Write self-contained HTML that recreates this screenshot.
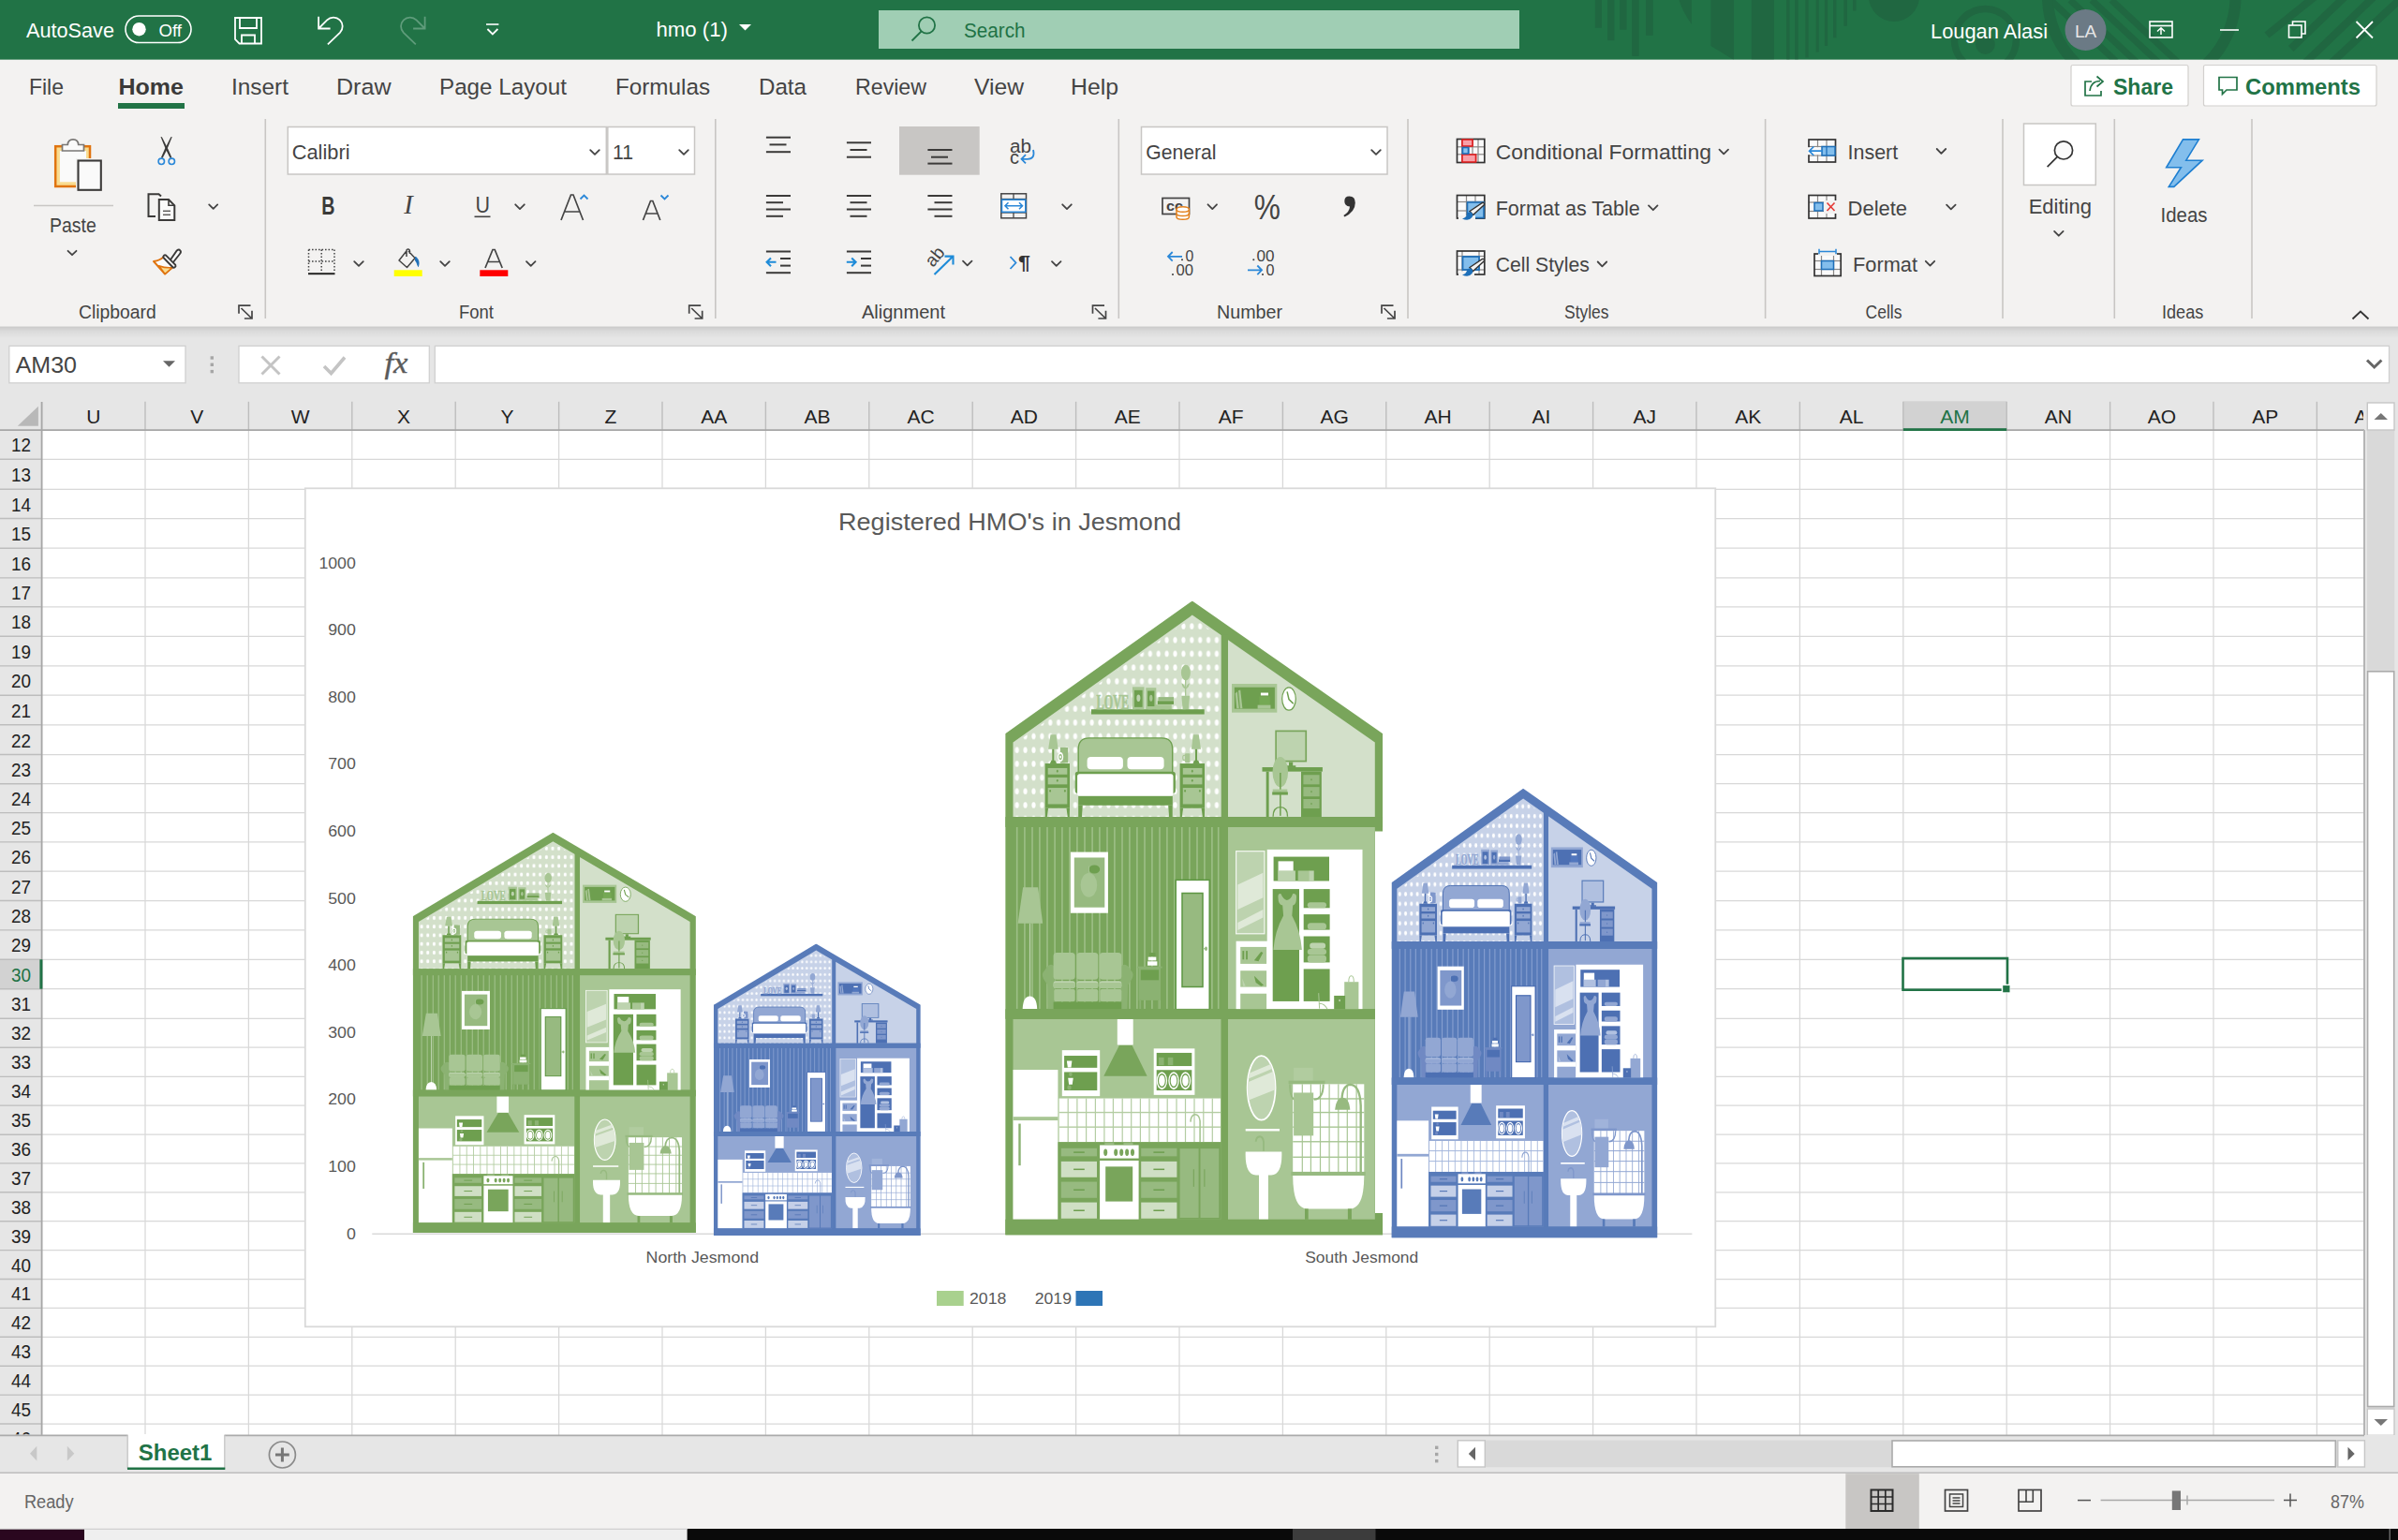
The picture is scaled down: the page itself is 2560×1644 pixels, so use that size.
<!DOCTYPE html>
<html><head><meta charset="utf-8"><title>hmo (1) - Excel</title><style>html,body{margin:0;padding:0;background:#fff;overflow:hidden}
svg{display:block}
text{font-family:"Liberation Sans",sans-serif;white-space:pre}
.hd{fill:var(--d)}.hm{fill:var(--m)}.ha{fill:var(--a)}.hb{fill:var(--b)}.hc{fill:var(--c)}.hl{fill:var(--l)}.hk{fill:var(--k)}.hq{fill:var(--q)}.hq2{fill:var(--q2)}.hg{fill:var(--g)}.hs{fill:var(--s)}.ht{fill:var(--t)}.hm2{fill:var(--m);filter:brightness(1.06)}.hw{fill:#fff}.hn{fill:none}
</style></head>
<body><svg width="2560" height="1644" viewBox="0 0 2560 1644">
<defs>
<linearGradient id="rshadow" x1="0" y1="0" x2="0" y2="1"><stop offset="0" stop-color="#000" stop-opacity="0.13"/><stop offset="0.4" stop-color="#000" stop-opacity="0.05"/><stop offset="1" stop-color="#000" stop-opacity="0"/></linearGradient>
<clipPath id="tbclip"><rect x="1650" y="0" width="910" height="63.5"/></clipPath>
<clipPath id="ringclip"><circle cx="2286.3" cy="-4" r="95"/></clipPath>
<clipPath id="hdrclip"><rect x="0" y="429" width="2523" height="30"/></clipPath>
<clipPath id="rowclip"><rect x="0" y="459" width="44" height="1072.5"/></clipPath>
<symbol id="house" viewBox="0 0 403 677" preserveAspectRatio="none">
<pattern id="dots" patternUnits="userSpaceOnUse" x="8.06" y="19.76" width="8.885" height="14.68"><ellipse cx="4.44" cy="7.34" rx="2.1" ry="3.3" fill="#fff"/></pattern>
<clipPath id="mirclip"><ellipse cx="273.4" cy="519.8" rx="14.7" ry="33.9"/></clipPath>
<polygon class="hd" points="0,141.8 199.6,0 403,141.8 403,677 0,677"/>
<polygon class="hl" points="8.3,230.6 8.3,151 199.6,15.2 394.6,151 394.6,230.6"/>
<rect class="ha" x="237.8" y="241.5" width="156.8" height="194.2"/>
<rect class="ha" x="8.3" y="446.3" width="222.2" height="214"/>
<rect class="ha" x="237.8" y="446.3" width="156.8" height="214"/>
<polygon fill="url(#dots)" points="8.3,230.6 8.3,153.5 199.6,17.7 230.5,39.5 230.5,230.6"/>
<rect class="hm" x="91.8" y="115.8" width="120.7" height="5.3"/>
<text class="ha" x="97.4" y="115.2" style="font-family:'Liberation Serif',serif;font-weight:bold;font-size:23.5px;stroke:var(--a);stroke-width:0.7" textLength="34.5" lengthAdjust="spacingAndGlyphs">LOVE</text>
<rect class="ha" x="135.8" y="91.9" width="12.5" height="23.7"/>
<rect class="hm" x="137.8" y="95.4" width="8.6" height="18"/>
<ellipse class="hk" cx="142.2" cy="103.8" rx="2" ry="3.7"/>
<rect class="ha" x="150.1" y="92.8" width="11" height="22.8"/>
<rect class="hm" x="151.9" y="96.1" width="7.3" height="16.5"/>
<ellipse class="ha" cx="155.6" cy="103.8" rx="1.7" ry="3.5"/>
<rect class="hb" x="163.3" y="102.7" width="16.5" height="3.7"/>
<rect class="hm" x="162.6" y="106.8" width="17.2" height="3.7"/>
<rect class="ha" x="160.2" y="110.8" width="17.4" height="4.8"/>
<polygon class="ha" points="188.1,101.4 196.9,101.4 195.6,115.6 189.4,115.6"/>
<rect class="ha" x="191.8" y="84" width="1.3" height="17.4"/>
<ellipse class="ha" cx="192.7" cy="76.7" rx="5" ry="8.3"/>
<path class="ha" d="M192.3 94.1Q188.6 92.3 188.3 87.7Q191.9 89.5 192.3 94.1M192.7 94.1Q196.3 92.3 196.7 87.7Q193 89.5 192.7 94.1"/>
<rect class="hm" x="42.4" y="173.6" width="26.4" height="47.7"/>
<rect class="ha" x="45.5" y="178.5" width="20.6" height="6.8"/>
<rect class="ha" x="45.5" y="188.6" width="20.6" height="7.3"/>
<rect class="ha" x="45.5" y="199.6" width="20.6" height="17.4"/>
<ellipse class="hm" cx="55.6" cy="181.8" rx="0.9" ry="1.4"/>
<ellipse class="hm" cx="55.6" cy="191.9" rx="0.9" ry="1.4"/>
<ellipse class="hm" cx="47.9" cy="202.9" rx="0.9" ry="1.4"/>
<ellipse class="hm" cx="63.7" cy="202.9" rx="0.9" ry="1.4"/>
<polygon class="hm" points="42.4,221.3 45.9,221.3 44.6,230.8 42.6,230.8"/>
<polygon class="hm" points="65.3,221.3 68.8,221.3 68.6,230.8 66.6,230.8"/>
<rect class="hm" x="186.4" y="173.6" width="26.4" height="47.7"/>
<rect class="ha" x="189.6" y="178.5" width="20.6" height="6.8"/>
<rect class="ha" x="189.6" y="188.6" width="20.6" height="7.3"/>
<rect class="ha" x="189.6" y="199.6" width="20.6" height="17.4"/>
<ellipse class="hm" cx="199.6" cy="181.8" rx="0.9" ry="1.4"/>
<ellipse class="hm" cx="199.6" cy="191.9" rx="0.9" ry="1.4"/>
<ellipse class="hm" cx="191.9" cy="202.9" rx="0.9" ry="1.4"/>
<ellipse class="hm" cx="207.7" cy="202.9" rx="0.9" ry="1.4"/>
<polygon class="hm" points="186.4,221.3 189.9,221.3 188.6,230.8 186.6,230.8"/>
<polygon class="hm" points="209.4,221.3 212.9,221.3 212.7,230.8 210.7,230.8"/>
<polygon class="ha" points="48.3,142.7 54.3,142.7 56.5,158.3 45.9,158.3"/>
<rect class="hm" x="50.1" y="158.3" width="2" height="12.3"/>
<polygon class="hm" points="49.2,170.3 53.2,170.3 54.7,173.6 47.7,173.6"/>
<polygon class="ha" points="200.6,142.7 206.6,142.7 208.8,158.3 198.7,158.3"/>
<rect class="hm" x="202.8" y="158.3" width="2" height="12.3"/>
<polygon class="hm" points="201.8,170.3 205.9,170.3 207.4,173.6 200.4,173.6"/>
<rect class="hb" x="58.7" y="156.5" width="8.3" height="16.5"/>
<ellipse class="hw" cx="58.9" cy="166.6" rx="3.1" ry="5.1"/>
<ellipse class="hb" cx="58.9" cy="166.6" rx="1.8" ry="3.1"/>
<ellipse class="hw" cx="58.9" cy="166.6" rx="0.9" ry="1.5"/>
<rect class="ha" x="191.8" y="162.9" width="5.3" height="9.7" rx="1"/>
<ellipse class="ha" cx="191" cy="167.5" rx="1.5" ry="2.6" style="fill:none;stroke:var(--a);stroke-width:1"/>
<path class="ha" d="M78 184L78 158.3Q78 146.4 89.6 146.4L167 146.4Q178.5 146.4 178.5 158.3L178.5 184Z" style="stroke:var(--m);stroke-width:1.4"/>
<rect class="hw" x="87.4" y="166.6" width="38.3" height="13.2" rx="4"/>
<rect class="hw" x="130.3" y="166.6" width="39.1" height="13.2" rx="4"/>
<rect class="hm" x="74.5" y="182.4" width="107.2" height="23.1" rx="3"/>
<rect class="hw" x="76.9" y="184.9" width="102.4" height="23.3" rx="2.5"/>
<rect class="hm" x="78" y="208.4" width="100.6" height="9.9"/>
<polygon class="hm" points="78,218.3 82.6,218.3 81.7,230.8 78,230.8"/>
<polygon class="hm" points="174,218.3 178.5,218.3 178.5,230.8 174.9,230.8"/>
<rect class="ha" x="241.8" y="88.6" width="48.3" height="30.6"/>
<rect class="hm" x="244.6" y="92.3" width="43.1" height="22.9"/>
<polygon class="ha" points="245.5,98.7 247.7,96.9 249.6,114.8 247,114.8"/>
<polygon class="ha" points="248.8,95.9 251,95 253.2,114.8 250.7,114.8"/>
<rect class="hw" x="272.7" y="98.1" width="8.1" height="2.9"/>
<rect class="hm2" x="271.2" y="102" width="11.4" height="9.2"/>
<rect class="ha" x="269.4" y="111.2" width="13.8" height="4"/>
<ellipse class="hw" cx="302.8" cy="104.6" rx="7.3" ry="12.1" style="stroke:var(--m);stroke-width:1.2"/>
<path class="hn" d="M300.9 96.9L302.8 105.1L307.5 109.7" style="fill:none;stroke:var(--m);stroke-width:1.5"/>
<rect class="hd" x="288.1" y="138.1" width="33.8" height="33.9"/>
<rect class="hk" x="289.7" y="139.8" width="30.5" height="30.5"/>
<rect class="hm" x="302.8" y="172.1" width="4.2" height="5.5"/>
<rect class="hm" x="298.7" y="175.8" width="11.4" height="2.2"/>
<rect class="hm" x="274.3" y="177.6" width="64.4" height="4.6"/>
<rect class="hm" x="278.5" y="182.2" width="2.9" height="48.6"/>
<rect class="hm" x="315.8" y="182.2" width="21.8" height="48.6"/>
<rect class="hb" x="318.2" y="185.8" width="17.2" height="10.1"/>
<ellipse class="hm" cx="326.8" cy="190.9" rx="0.7" ry="1.1"/>
<rect class="hb" x="318.2" y="198.7" width="17.2" height="10.1"/>
<ellipse class="hm" cx="326.8" cy="203.7" rx="0.7" ry="1.1"/>
<rect class="hb" x="318.2" y="211.5" width="17.2" height="10.1"/>
<ellipse class="hm" cx="326.8" cy="216.6" rx="0.7" ry="1.1"/>
<ellipse class="ha" cx="293.6" cy="182.7" rx="8.3" ry="16.1"/>
<rect class="hm" x="292.9" y="183.5" width="1.5" height="45.9"/>
<rect class="ha" x="285.5" y="201.1" width="15.6" height="3.3"/>
<rect class="hm" x="285" y="204" width="16.7" height="3.1"/>
<path class="hn" d="M285.9 230.4Q285.9 220.2 293.6 220.2Q301.3 220.2 301.3 230.4" style="fill:none;stroke:var(--m);stroke-width:1.4"/>
<g class="hs">
<rect x="11.7" y="241.5" width="1.6" height="193.9"/>
<rect x="19.9" y="241.5" width="1.6" height="193.9"/>
<rect x="28" y="241.5" width="1.6" height="193.9"/>
<rect x="35.9" y="241.5" width="1.6" height="193.9"/>
<rect x="44" y="241.5" width="1.6" height="193.9"/>
<rect x="52.1" y="241.5" width="1.6" height="193.9"/>
<rect x="59.9" y="241.5" width="1.6" height="193.9"/>
<rect x="68" y="241.5" width="1.6" height="193.9"/>
<rect x="75.9" y="241.5" width="1.6" height="193.9"/>
<rect x="84" y="241.5" width="1.6" height="193.9"/>
<rect x="92.1" y="241.5" width="1.6" height="193.9"/>
<rect x="99.9" y="241.5" width="1.6" height="193.9"/>
<rect x="108" y="241.5" width="1.6" height="193.9"/>
<rect x="115.9" y="241.5" width="1.6" height="193.9"/>
<rect x="124" y="241.5" width="1.6" height="193.9"/>
<rect x="131.9" y="241.5" width="1.6" height="193.9"/>
<rect x="139.9" y="241.5" width="1.6" height="193.9"/>
<rect x="148" y="241.5" width="1.6" height="193.9"/>
<rect x="155.9" y="241.5" width="1.6" height="193.9"/>
<rect x="164" y="241.5" width="1.6" height="193.9"/>
<rect x="171.9" y="241.5" width="1.6" height="193.9"/>
<rect x="179.9" y="241.5" width="1.6" height="193.9"/>
<rect x="187.8" y="241.5" width="1.6" height="193.9"/>
<rect x="195.9" y="241.5" width="1.6" height="193.9"/>
<rect x="204" y="241.5" width="1.6" height="193.9"/>
<rect x="211.9" y="241.5" width="1.6" height="193.9"/>
<rect x="219.9" y="241.5" width="1.6" height="193.9"/>
<rect x="226.7" y="241.5" width="1.6" height="193.9"/>
</g>
<rect class="hw" x="69.7" y="268.1" width="40" height="65.1"/>
<rect class="hb" x="73.6" y="274" width="32.5" height="53.2"/>
<ellipse class="ha" cx="89.2" cy="303.4" rx="8.8" ry="12.8"/>
<ellipse class="hm" cx="95.1" cy="286.5" rx="5.9" ry="4.6"/>
<rect class="ha" x="88.8" y="283.2" width="0.9" height="8.8"/>
<polygon class="ha" points="18.9,305.8 34.9,305.8 40,344.3 13.4,344.3"/>
<rect class="hk" x="25.7" y="344.3" width="1.3" height="78.9"/>
<path class="hw" d="M18.5 435.5Q18.9 422.3 26.2 421.9Q33.6 422.3 34 435.5Z"/>
<path class="hc" d="M45.9 436L45.1 409.4Q36.3 399.3 41.8 394.7Q47.4 384.7 52.5 390.2L55.1 436Z"/>
<path class="hc" d="M130.3 436L131 409.4Q139.8 399.3 134.3 394.7Q128.8 384.7 123.7 390.2L121.1 436Z"/>
<rect class="ha" x="51.4" y="375.5" width="23.1" height="28.8" rx="3.5"/>
<rect class="hk" x="51.4" y="405.8" width="23.1" height="7.7" rx="2.5"/>
<rect class="ha" x="51.4" y="407.6" width="23.1" height="5.9" rx="2"/>
<rect class="ha" x="52.1" y="414.2" width="22.4" height="13.6" rx="2.5"/>
<rect class="ha" x="76.2" y="375.5" width="22.9" height="28.8" rx="3.5"/>
<rect class="hk" x="76.2" y="405.8" width="22.9" height="7.7" rx="2.5"/>
<rect class="ha" x="76.2" y="407.6" width="22.9" height="5.9" rx="2"/>
<rect class="ha" x="76.9" y="414.2" width="22.2" height="13.6" rx="2.5"/>
<rect class="ha" x="100.6" y="375.5" width="23.5" height="28.8" rx="3.5"/>
<rect class="hk" x="100.6" y="405.8" width="23.5" height="7.7" rx="2.5"/>
<rect class="ha" x="100.6" y="407.6" width="23.5" height="5.9" rx="2"/>
<rect class="ha" x="101.3" y="414.2" width="22.8" height="13.6" rx="2.5"/>
<rect class="hm" x="51.4" y="428.1" width="72.7" height="7.9"/>
<rect class="hc" x="142.4" y="391.1" width="23.3" height="35.2"/>
<rect class="hm" x="144.6" y="393.8" width="19.3" height="11"/>
<rect class="hc" x="140.9" y="390.2" width="26.6" height="1.8"/>
<rect class="hc" x="143.1" y="426.3" width="1.8" height="9.2"/>
<rect class="hc" x="162.9" y="426.3" width="1.8" height="9.2"/>
<rect class="hm" x="153.8" y="375.5" width="6.4" height="4"/>
<rect class="hw" x="152.5" y="380.1" width="8.6" height="3.7"/>
<rect class="hw" x="151.9" y="384.8" width="10.3" height="4.4"/>
<rect class="hw" x="182" y="297.9" width="36" height="138.2" style="stroke:var(--x);stroke-width:1.5"/>
<rect class="hb" x="188.8" y="312" width="22" height="100" style="stroke:var(--x);stroke-width:1.5"/>
<ellipse class="hb" cx="214.3" cy="371.3" rx="1.5" ry="2.2"/>
<rect class="hb" x="211" y="370.7" width="3.3" height="1.1"/>
<rect class="hk" x="246.4" y="267.2" width="30.3" height="88.1" style="stroke:#fff;stroke-opacity:.85;stroke-width:1.2"/>
<polygon class="hq" points="248.1,303 275.2,290.2 275.2,316.8 248.1,329.6"/>
<polygon class="hq" points="248.1,343.4 275.2,329.6 275.2,337.9 248.1,351.6"/>
<rect class="hw" x="279.5" y="265.4" width="101.8" height="170.6"/>
<rect class="hw" x="246.4" y="363.2" width="33.4" height="72.8"/>
<rect class="hm" x="286.4" y="273.1" width="59.4" height="25.9"/>
<rect class="hw" x="291.4" y="277.9" width="16.1" height="10.5"/>
<rect class="hk" x="291" y="288" width="18.7" height="11"/>
<rect class="ha" x="312.5" y="288" width="11.6" height="11"/>
<rect class="hk" x="324" y="288" width="5.5" height="11"/>
<rect class="hm" x="285.5" y="307.6" width="28.3" height="119.8"/>
<path class="ha" d="M291.4 317.7Q290.5 312.2 294.1 312.5Q296.9 318.6 300.6 319.5Q305.1 318.6 307 312.5Q311.6 312.2 310.7 317.7Q310.7 324.1 307 325L306.1 336Q315.2 352.5 316.7 372.4L286.2 372.4Q287.7 352.5 296.9 336L296 325Q291.4 324.1 291.4 317.7Z"/>
<rect class="hm" x="318.5" y="307.6" width="27.9" height="20.2"/>
<rect class="hm" x="318.5" y="334.6" width="27.9" height="16.5"/>
<rect class="hm" x="318.5" y="358" width="27.9" height="27.9"/>
<rect class="hm" x="318.5" y="392.9" width="27.9" height="34.5"/>
<rect class="ha" x="322.6" y="321.7" width="20.2" height="6.1" rx="3"/>
<rect class="ha" x="322.6" y="343.7" width="20.2" height="7.3" rx="3.5"/>
<rect class="hk" x="325" y="365" width="16.9" height="6.2" rx="3"/>
<rect class="ha" x="322.6" y="371.4" width="20.2" height="6.4" rx="3"/>
<rect class="ha" x="322.6" y="377.9" width="20.2" height="8.1" rx="3.5"/>
<rect class="ha" x="251" y="369.4" width="27.9" height="18"/>
<rect class="ha" x="251" y="394.7" width="27.9" height="17.4"/>
<rect class="ha" x="251" y="419.2" width="27.9" height="16.9"/>
<rect class="hm" x="253.2" y="373.6" width="1.8" height="9.2"/>
<rect class="hm" x="256.9" y="373.6" width="1.8" height="9.2"/>
<polygon class="hm" points="265.7,383.7 273,374.6 275.2,375.5 270.3,384.7"/>
<polygon class="hk" points="252.9,403 256.5,411.3 253.8,411.3"/>
<polygon class="hm" points="265.7,400.3 275.8,410.3 273,411.3 267.5,407.6"/>
<rect class="ha" x="362" y="406.7" width="15.2" height="29.4"/>
<path class="hn" d="M366.6 406.7Q366.6 400.3 369.4 400.3Q372.1 400.3 372.1 406.7" style="fill:none;stroke:var(--a);stroke-width:1"/>
<rect class="hm" x="351" y="421.4" width="11.9" height="14.7"/>
<ellipse class="hk" cx="356.9" cy="426.5" rx="0.9" ry="1.3"/>
<path class="hn" d="M334.5 418.6L335.4 435.1M335.4 429.6Q340.9 429.6 343.7 435.5" style="fill:none;stroke:var(--a);stroke-width:1"/>
<rect class="hw" x="8.3" y="500.5" width="47.9" height="159.6"/>
<rect class="ha" x="8.3" y="550.6" width="47.9" height="3.9"/>
<rect class="hc" x="14.1" y="558" width="2.4" height="44.6"/>
<rect class="hw" x="119.6" y="446.4" width="16.9" height="27.5"/>
<polygon class="hd" points="121.7,474.5 135.4,474.5 151.4,507.1 105.1,507.1"/>
<rect class="hw" x="60.6" y="479.6" width="40.4" height="49"/>
<rect class="hm" x="62.9" y="485.5" width="35.2" height="12.8"/>
<rect class="hm" x="62.9" y="502.9" width="35.2" height="19.6"/>
<polygon class="hw" points="65.7,491 71.2,491 70.3,498 66.6,498"/>
<polygon class="hw" points="67,509.3 72.5,509.3 71.6,516.3 67.9,516.3"/>
<ellipse class="hc" cx="68.3" cy="519.4" rx="2.2" ry="2.6"/>
<ellipse class="hc" cx="69.7" cy="505.3" rx="1.8" ry="2.2"/>
<rect class="hw" x="158.5" y="477.8" width="43.7" height="49.5"/>
<rect class="hm" x="161.5" y="482.4" width="37.6" height="14.1"/>
<rect class="hm" x="161.5" y="500.7" width="37.6" height="21.8"/>
<rect class="hc" x="163.9" y="487.3" width="5.5" height="8.3"/>
<rect class="hc" x="173.6" y="487.3" width="5.5" height="8.3"/>
<ellipse class="hw" cx="167.2" cy="512.1" rx="5.7" ry="9.5"/>
<ellipse class="hm" cx="167.2" cy="512.1" rx="4.4" ry="7.7"/>
<ellipse class="hw" cx="167.2" cy="512.1" rx="3.3" ry="6.2"/>
<ellipse class="hw" cx="179.8" cy="512.1" rx="5.7" ry="9.5"/>
<ellipse class="hm" cx="179.8" cy="512.1" rx="4.4" ry="7.7"/>
<ellipse class="hw" cx="179.8" cy="512.1" rx="3.3" ry="6.2"/>
<ellipse class="hw" cx="192.3" cy="512.1" rx="5.7" ry="9.5"/>
<ellipse class="hm" cx="192.3" cy="512.1" rx="4.4" ry="7.7"/>
<ellipse class="hw" cx="192.3" cy="512.1" rx="3.3" ry="6.2"/>
<rect class="hw" x="57.4" y="531" width="172.5" height="46.6"/>
<g class="ht">
<rect x="66.4" y="531" width="1.2" height="46.6"/>
<rect x="76.1" y="531" width="1.2" height="46.6"/>
<rect x="85.8" y="531" width="1.2" height="46.6"/>
<rect x="95.6" y="531" width="1.2" height="46.6"/>
<rect x="105.1" y="531" width="1.2" height="46.6"/>
<rect x="114.6" y="531" width="1.2" height="46.6"/>
<rect x="124.4" y="531" width="1.2" height="46.6"/>
<rect x="133.9" y="531" width="1.2" height="46.6"/>
<rect x="143.6" y="531" width="1.2" height="46.6"/>
<rect x="153.2" y="531" width="1.2" height="46.6"/>
<rect x="162.9" y="531" width="1.2" height="46.6"/>
<rect x="172.4" y="531" width="1.2" height="46.6"/>
<rect x="182.2" y="531" width="1.2" height="46.6"/>
<rect x="191.7" y="531" width="1.2" height="46.6"/>
<rect x="201.2" y="531" width="1.2" height="46.6"/>
<rect x="211" y="531" width="1.2" height="46.6"/>
<rect x="220.5" y="531" width="1.2" height="46.6"/>
<rect x="57.4" y="545.3" width="172.5" height="1.4"/>
<rect x="57.4" y="560.9" width="172.5" height="1.4"/>
</g>
<path class="hn" d="M207.9 577.6L207.9 555.2Q207 547.9 202.4 548.2Q198.2 548.8 197.8 556.1" style="fill:none;stroke:var(--a);stroke-width:1.6"/>
<rect class="hd" x="56.2" y="577.6" width="174.3" height="82.6"/>
<rect class="hb" x="59.6" y="584.2" width="38.2" height="8.6"/>
<rect class="hm" x="72.9" y="587.8" width="11.7" height="1.5"/>
<rect class="hq2" x="59.6" y="598.3" width="38.2" height="16.9"/>
<rect class="hm" x="72.9" y="606" width="11.7" height="1.5"/>
<rect class="hb" x="59.6" y="620" width="38.2" height="17.2"/>
<rect class="hm" x="72.9" y="627.9" width="11.7" height="1.5"/>
<rect class="hq2" x="59.6" y="642" width="38.2" height="17.2"/>
<rect class="hm" x="72.9" y="649.9" width="11.7" height="1.5"/>
<rect class="hb" x="145" y="584.2" width="38.2" height="8.6"/>
<rect class="hm" x="158.2" y="587.8" width="11.7" height="1.5"/>
<rect class="hq2" x="145" y="598.3" width="38.2" height="16.9"/>
<rect class="hm" x="158.2" y="606" width="11.7" height="1.5"/>
<rect class="hb" x="145" y="620" width="38.2" height="17.2"/>
<rect class="hm" x="158.2" y="627.9" width="11.7" height="1.5"/>
<rect class="hq2" x="145" y="642" width="38.2" height="17.2"/>
<rect class="hm" x="158.2" y="649.9" width="11.7" height="1.5"/>
<rect class="hw" x="100.9" y="580.9" width="41.5" height="14.1"/>
<rect class="hw" x="100.9" y="597.4" width="41.5" height="62.8"/>
<rect class="hd" x="107" y="603.8" width="29" height="37.2"/>
<ellipse class="hd" cx="107" cy="588.6" rx="2" ry="3.7"/>
<ellipse class="hd" cx="118" cy="588.6" rx="2" ry="3.7"/>
<ellipse class="hd" cx="124" cy="588.6" rx="2" ry="3.7"/>
<ellipse class="hd" cx="129.9" cy="588.6" rx="2" ry="3.7"/>
<ellipse class="hd" cx="135.8" cy="588.6" rx="2" ry="3.7"/>
<rect class="hb" x="106.1" y="578.1" width="10.1" height="2.4"/>
<rect class="hb" x="126.2" y="578.1" width="10.1" height="2.4"/>
<rect class="hb" x="186.4" y="584.6" width="20" height="73.8"/>
<rect class="hb" x="208.3" y="584.6" width="19.8" height="73.8"/>
<rect class="hd" x="200.6" y="606.6" width="1.1" height="18.7"/>
<rect class="hd" x="212.1" y="606.6" width="1.1" height="18.7"/>
<ellipse class="hk" cx="273.4" cy="519.8" rx="15" ry="34.3" style="stroke:#fff;stroke-width:1.7"/>
<g clip-path="url(#mirclip)">
<polygon class="hq" points="256.5,505.7 291.4,491 291.4,496.5 256.5,511.2"/>
<polygon class="hq" points="256.5,514.8 291.4,500.2 291.4,520.3 256.5,534.1"/>
</g>
<rect class="hw" x="256.5" y="563.5" width="36.3" height="2.4"/>
<path class="hn" d="M275.8 587.3L275.8 577.2Q274.9 571.7 271.6 571.7Q267.9 572.1 267.5 577.2" style="fill:none;stroke:var(--b);stroke-width:1.9"/>
<path class="hw" d="M256.5 587.9L295.1 587.9Q296 612.1 284 613L280.7 613L280.7 660.2L270.8 660.2L270.8 613L267.5 613Q255.6 612.1 256.5 587.9Z"/>
<rect class="hw" x="307" y="515.8" width="76.1" height="94.5"/>
<g class="ha">
<rect x="316.5" y="515.8" width="1.2" height="94.5"/>
<rect x="325.6" y="515.8" width="1.2" height="94.5"/>
<rect x="335.7" y="515.8" width="1.2" height="94.5"/>
<rect x="345.3" y="515.8" width="1.2" height="94.5"/>
<rect x="355" y="515.8" width="1.2" height="94.5"/>
<rect x="364.5" y="515.8" width="1.2" height="94.5"/>
<rect x="374.3" y="515.8" width="1.2" height="94.5"/>
<rect x="307" y="530.7" width="76.1" height="1.4"/>
<rect x="307" y="545.3" width="76.1" height="1.4"/>
<rect x="307" y="560.9" width="76.1" height="1.4"/>
<rect x="307" y="576.5" width="76.1" height="1.4"/>
<rect x="307" y="593" width="76.1" height="1.4"/>
</g>
<rect class="hg" x="307.9" y="498.3" width="20.6" height="15"/>
<rect class="hb" x="302.4" y="512.1" width="38.9" height="3.5"/>
<path class="hn" d="M303.9 515.9Q303.9 531.4 309.7 532.3M339.5 515.9Q339.5 531.4 329.6 532.3" style="fill:none;stroke:var(--b);stroke-width:2"/>
<rect class="ha" x="307.9" y="524.9" width="21.1" height="45.9"/>
<path class="hn" d="M379.5 610.3L379.5 538.7Q378.5 516.7 368.5 516.3Q360.2 516.7 359.3 531.4" style="fill:none;stroke:var(--b);stroke-width:2.4"/>
<path class="hb" d="M351.9 543.3Q352.9 530.4 360 530.1Q367.2 530.4 368.1 543.3Z"/>
<rect class="hb" x="305.1" y="609.3" width="79.4" height="4"/>
<path class="hw" d="M307 613.4L383.1 613.4Q383.1 647.9 368.5 648.8L321.7 648.8Q307 647.9 307 613.4Z"/>
<rect class="hd" x="319.8" y="648.8" width="3.7" height="11.4"/>
<rect class="hd" x="365.7" y="648.8" width="4" height="11.4"/>
<rect class="hd" x="230.5" y="36" width="7.3" height="630"/>
<rect class="hd" x="0" y="230.6" width="403" height="10.9"/>
<rect class="hd" x="0" y="435.7" width="403" height="10.6"/>
<rect class="hd" x="0" y="660.2" width="403" height="16.8"/>
</symbol>
</defs>
<rect x="0.0" y="361.0" width="2560.0" height="1171.0" fill="#e6e6e6" />
<rect x="0.0" y="348.0" width="2560.0" height="13.0" fill="#e6e6e6" />
<rect x="0" y="348.4" width="2560" height="13" fill="url(#rshadow)"/>
<rect x="9.8" y="369.3" width="188.2" height="39.5" fill="#fff" stroke="#d0d0d0" stroke-width="1.3" />
<text x="16.7" y="398.4" fill="#444" style="font-size:23px;" textLength="65.3" lengthAdjust="spacingAndGlyphs" >AM30</text>
<path d="M174 385.3 H187 L180.5 391.8Z" fill="#666" />
<rect x="224.6" y="380.3" width="3.4" height="3.4" fill="#a6a6a6" />
<rect x="224.6" y="387.6" width="3.4" height="3.4" fill="#a6a6a6" />
<rect x="224.6" y="394.9" width="3.4" height="3.4" fill="#a6a6a6" />
<rect x="255.0" y="369.3" width="203.3" height="39.5" fill="#fff" stroke="#d0d0d0" stroke-width="1.3" />
<path d="M279.5 380.5 L298.5 399.5 M298.5 380.5 L279.5 399.5" fill="none" stroke="#c4c4c4" stroke-width="3" />
<path d="M346 391 L353.5 398.5 L368 381.5" fill="none" stroke="#c4c4c4" stroke-width="3.6" />
<text x="410.5" y="397.6" fill="#5a5a5a" stroke="#5a5a5a" stroke-width="0.35" style="font-size:32px;font-style:italic;font-family:'Liberation Serif',serif;" textLength="25" lengthAdjust="spacingAndGlyphs">fx</text>
<rect x="464.3" y="369.3" width="2086.2" height="39.5" fill="#fff" stroke="#d0d0d0" stroke-width="1.3" />
<path d="M2527 384.5 L2534.7 392 L2542.4 384.5" fill="none" stroke="#666" stroke-width="3" />
<rect x="44.6" y="459.0" width="2479.4" height="1073.0" fill="#fff" />
<rect x="0.0" y="428.3" width="2524.0" height="30.7" fill="#e6e6e6" />
<rect x="0.0" y="459.0" width="44.6" height="1073.0" fill="#e6e6e6" />
<rect x="2031.8" y="428.3" width="110.4" height="30.7" fill="#d2d2d2" />
<rect x="0.0" y="1024.3" width="44.6" height="31.4" fill="#d2d2d2" />
<g stroke="#d8d8d8" stroke-width="1.25">
<line x1="155.0" y1="459" x2="155.0" y2="1532"/>
<line x1="265.4" y1="459" x2="265.4" y2="1532"/>
<line x1="375.8" y1="459" x2="375.8" y2="1532"/>
<line x1="486.2" y1="459" x2="486.2" y2="1532"/>
<line x1="596.6" y1="459" x2="596.6" y2="1532"/>
<line x1="707.0" y1="459" x2="707.0" y2="1532"/>
<line x1="817.4" y1="459" x2="817.4" y2="1532"/>
<line x1="927.8" y1="459" x2="927.8" y2="1532"/>
<line x1="1038.2" y1="459" x2="1038.2" y2="1532"/>
<line x1="1148.6" y1="459" x2="1148.6" y2="1532"/>
<line x1="1259.0" y1="459" x2="1259.0" y2="1532"/>
<line x1="1369.4" y1="459" x2="1369.4" y2="1532"/>
<line x1="1479.8" y1="459" x2="1479.8" y2="1532"/>
<line x1="1590.2" y1="459" x2="1590.2" y2="1532"/>
<line x1="1700.6" y1="459" x2="1700.6" y2="1532"/>
<line x1="1811.0" y1="459" x2="1811.0" y2="1532"/>
<line x1="1921.4" y1="459" x2="1921.4" y2="1532"/>
<line x1="2031.8" y1="459" x2="2031.8" y2="1532"/>
<line x1="2142.2" y1="459" x2="2142.2" y2="1532"/>
<line x1="2252.6" y1="459" x2="2252.6" y2="1532"/>
<line x1="2363.0" y1="459" x2="2363.0" y2="1532"/>
<line x1="2473.4" y1="459" x2="2473.4" y2="1532"/>
<line x1="44.6" y1="490.3" x2="2524" y2="490.3"/>
<line x1="44.6" y1="522.3" x2="2524" y2="522.3"/>
<line x1="44.6" y1="553.5" x2="2524" y2="553.5"/>
<line x1="44.6" y1="585.2" x2="2524" y2="585.2"/>
<line x1="44.6" y1="616.9" x2="2524" y2="616.9"/>
<line x1="44.6" y1="647.8" x2="2524" y2="647.8"/>
<line x1="44.6" y1="679.3" x2="2524" y2="679.3"/>
<line x1="44.6" y1="710.9" x2="2524" y2="710.9"/>
<line x1="44.6" y1="742.2" x2="2524" y2="742.2"/>
<line x1="44.6" y1="773.8" x2="2524" y2="773.8"/>
<line x1="44.6" y1="805.5" x2="2524" y2="805.5"/>
<line x1="44.6" y1="836.7" x2="2524" y2="836.7"/>
<line x1="44.6" y1="867.6" x2="2524" y2="867.6"/>
<line x1="44.6" y1="898.9" x2="2524" y2="898.9"/>
<line x1="44.6" y1="930.2" x2="2524" y2="930.2"/>
<line x1="44.6" y1="961.5" x2="2524" y2="961.5"/>
<line x1="44.6" y1="992.9" x2="2524" y2="992.9"/>
<line x1="44.6" y1="1024.3" x2="2524" y2="1024.3"/>
<line x1="44.6" y1="1055.7" x2="2524" y2="1055.7"/>
<line x1="44.6" y1="1087.3" x2="2524" y2="1087.3"/>
<line x1="44.6" y1="1118.2" x2="2524" y2="1118.2"/>
<line x1="44.6" y1="1149.4" x2="2524" y2="1149.4"/>
<line x1="44.6" y1="1180.1" x2="2524" y2="1180.1"/>
<line x1="44.6" y1="1211.2" x2="2524" y2="1211.2"/>
<line x1="44.6" y1="1241.9" x2="2524" y2="1241.9"/>
<line x1="44.6" y1="1272.8" x2="2524" y2="1272.8"/>
<line x1="44.6" y1="1303.7" x2="2524" y2="1303.7"/>
<line x1="44.6" y1="1334.6" x2="2524" y2="1334.6"/>
<line x1="44.6" y1="1365.5" x2="2524" y2="1365.5"/>
<line x1="44.6" y1="1396.4" x2="2524" y2="1396.4"/>
<line x1="44.6" y1="1427.3" x2="2524" y2="1427.3"/>
<line x1="44.6" y1="1458.2" x2="2524" y2="1458.2"/>
<line x1="44.6" y1="1489.1" x2="2524" y2="1489.1"/>
<line x1="44.6" y1="1520.0" x2="2524" y2="1520.0"/>
</g>
<g stroke="#bdbdbd" stroke-width="1.4">
<line x1="155.0" y1="428.8" x2="155.0" y2="459"/>
<line x1="265.4" y1="428.8" x2="265.4" y2="459"/>
<line x1="375.8" y1="428.8" x2="375.8" y2="459"/>
<line x1="486.2" y1="428.8" x2="486.2" y2="459"/>
<line x1="596.6" y1="428.8" x2="596.6" y2="459"/>
<line x1="707.0" y1="428.8" x2="707.0" y2="459"/>
<line x1="817.4" y1="428.8" x2="817.4" y2="459"/>
<line x1="927.8" y1="428.8" x2="927.8" y2="459"/>
<line x1="1038.2" y1="428.8" x2="1038.2" y2="459"/>
<line x1="1148.6" y1="428.8" x2="1148.6" y2="459"/>
<line x1="1259.0" y1="428.8" x2="1259.0" y2="459"/>
<line x1="1369.4" y1="428.8" x2="1369.4" y2="459"/>
<line x1="1479.8" y1="428.8" x2="1479.8" y2="459"/>
<line x1="1590.2" y1="428.8" x2="1590.2" y2="459"/>
<line x1="1700.6" y1="428.8" x2="1700.6" y2="459"/>
<line x1="1811.0" y1="428.8" x2="1811.0" y2="459"/>
<line x1="1921.4" y1="428.8" x2="1921.4" y2="459"/>
<line x1="2031.8" y1="428.8" x2="2031.8" y2="459"/>
<line x1="2142.2" y1="428.8" x2="2142.2" y2="459"/>
<line x1="2252.6" y1="428.8" x2="2252.6" y2="459"/>
<line x1="2363.0" y1="428.8" x2="2363.0" y2="459"/>
<line x1="2473.4" y1="428.8" x2="2473.4" y2="459"/>
<line x1="0" y1="490.3" x2="44.6" y2="490.3"/>
<line x1="0" y1="522.3" x2="44.6" y2="522.3"/>
<line x1="0" y1="553.5" x2="44.6" y2="553.5"/>
<line x1="0" y1="585.2" x2="44.6" y2="585.2"/>
<line x1="0" y1="616.9" x2="44.6" y2="616.9"/>
<line x1="0" y1="647.8" x2="44.6" y2="647.8"/>
<line x1="0" y1="679.3" x2="44.6" y2="679.3"/>
<line x1="0" y1="710.9" x2="44.6" y2="710.9"/>
<line x1="0" y1="742.2" x2="44.6" y2="742.2"/>
<line x1="0" y1="773.8" x2="44.6" y2="773.8"/>
<line x1="0" y1="805.5" x2="44.6" y2="805.5"/>
<line x1="0" y1="836.7" x2="44.6" y2="836.7"/>
<line x1="0" y1="867.6" x2="44.6" y2="867.6"/>
<line x1="0" y1="898.9" x2="44.6" y2="898.9"/>
<line x1="0" y1="930.2" x2="44.6" y2="930.2"/>
<line x1="0" y1="961.5" x2="44.6" y2="961.5"/>
<line x1="0" y1="992.9" x2="44.6" y2="992.9"/>
<line x1="0" y1="1024.3" x2="44.6" y2="1024.3"/>
<line x1="0" y1="1055.7" x2="44.6" y2="1055.7"/>
<line x1="0" y1="1087.3" x2="44.6" y2="1087.3"/>
<line x1="0" y1="1118.2" x2="44.6" y2="1118.2"/>
<line x1="0" y1="1149.4" x2="44.6" y2="1149.4"/>
<line x1="0" y1="1180.1" x2="44.6" y2="1180.1"/>
<line x1="0" y1="1211.2" x2="44.6" y2="1211.2"/>
<line x1="0" y1="1241.9" x2="44.6" y2="1241.9"/>
<line x1="0" y1="1272.8" x2="44.6" y2="1272.8"/>
<line x1="0" y1="1303.7" x2="44.6" y2="1303.7"/>
<line x1="0" y1="1334.6" x2="44.6" y2="1334.6"/>
<line x1="0" y1="1365.5" x2="44.6" y2="1365.5"/>
<line x1="0" y1="1396.4" x2="44.6" y2="1396.4"/>
<line x1="0" y1="1427.3" x2="44.6" y2="1427.3"/>
<line x1="0" y1="1458.2" x2="44.6" y2="1458.2"/>
<line x1="0" y1="1489.1" x2="44.6" y2="1489.1"/>
<line x1="0" y1="1520.0" x2="44.6" y2="1520.0"/>
</g>
<line x1="0.0" y1="459.2" x2="2524.0" y2="459.2" stroke="#a6a6a6" stroke-width="1.8" />
<line x1="44.6" y1="429.0" x2="44.6" y2="1532.0" stroke="#a6a6a6" stroke-width="1.8" />
<line x1="2524.0" y1="459.0" x2="2524.0" y2="1532.0" stroke="#b5b5b5" stroke-width="2" />
<path d="M40.9 433.8 V454.7 H18.8Z" fill="#b8b8b8" />
<g clip-path="url(#hdrclip)">
<text x="99.8" y="451.8" fill="#222" text-anchor="middle" style="font-size:21px;" >U</text>
<text x="210.2" y="451.8" fill="#222" text-anchor="middle" style="font-size:21px;" >V</text>
<text x="320.6" y="451.8" fill="#222" text-anchor="middle" style="font-size:21px;" >W</text>
<text x="431.0" y="451.8" fill="#222" text-anchor="middle" style="font-size:21px;" >X</text>
<text x="541.4" y="451.8" fill="#222" text-anchor="middle" style="font-size:21px;" >Y</text>
<text x="651.8" y="451.8" fill="#222" text-anchor="middle" style="font-size:21px;" >Z</text>
<text x="762.2" y="451.8" fill="#222" text-anchor="middle" style="font-size:21px;" >AA</text>
<text x="872.6" y="451.8" fill="#222" text-anchor="middle" style="font-size:21px;" >AB</text>
<text x="983.0" y="451.8" fill="#222" text-anchor="middle" style="font-size:21px;" >AC</text>
<text x="1093.4" y="451.8" fill="#222" text-anchor="middle" style="font-size:21px;" >AD</text>
<text x="1203.8" y="451.8" fill="#222" text-anchor="middle" style="font-size:21px;" >AE</text>
<text x="1314.2" y="451.8" fill="#222" text-anchor="middle" style="font-size:21px;" >AF</text>
<text x="1424.6" y="451.8" fill="#222" text-anchor="middle" style="font-size:21px;" >AG</text>
<text x="1535.0" y="451.8" fill="#222" text-anchor="middle" style="font-size:21px;" >AH</text>
<text x="1645.4" y="451.8" fill="#222" text-anchor="middle" style="font-size:21px;" >AI</text>
<text x="1755.8" y="451.8" fill="#222" text-anchor="middle" style="font-size:21px;" >AJ</text>
<text x="1866.2" y="451.8" fill="#222" text-anchor="middle" style="font-size:21px;" >AK</text>
<text x="1976.6" y="451.8" fill="#222" text-anchor="middle" style="font-size:21px;" >AL</text>
<text x="2087.0" y="451.8" fill="#217346" text-anchor="middle" style="font-size:21px;" >AM</text>
<text x="2197.4" y="451.8" fill="#222" text-anchor="middle" style="font-size:21px;" >AN</text>
<text x="2307.8" y="451.8" fill="#222" text-anchor="middle" style="font-size:21px;" >AO</text>
<text x="2418.2" y="451.8" fill="#222" text-anchor="middle" style="font-size:21px;" >AP</text>
<text x="2528.6" y="451.8" fill="#222" text-anchor="middle" style="font-size:21px;" >AQ</text>
</g>
<rect x="2031.8" y="457.2" width="110.4" height="2.8" fill="#217346" />
<g clip-path="url(#rowclip)">
<text x="22.6" y="482.3" fill="#222" text-anchor="middle" style="font-size:20.5px;" textLength="21.0" lengthAdjust="spacingAndGlyphs" >12</text>
<text x="22.6" y="514.3" fill="#222" text-anchor="middle" style="font-size:20.5px;" textLength="21.0" lengthAdjust="spacingAndGlyphs" >13</text>
<text x="22.6" y="545.5" fill="#222" text-anchor="middle" style="font-size:20.5px;" textLength="21.0" lengthAdjust="spacingAndGlyphs" >14</text>
<text x="22.6" y="577.2" fill="#222" text-anchor="middle" style="font-size:20.5px;" textLength="21.0" lengthAdjust="spacingAndGlyphs" >15</text>
<text x="22.6" y="608.9" fill="#222" text-anchor="middle" style="font-size:20.5px;" textLength="21.0" lengthAdjust="spacingAndGlyphs" >16</text>
<text x="22.6" y="639.8" fill="#222" text-anchor="middle" style="font-size:20.5px;" textLength="21.0" lengthAdjust="spacingAndGlyphs" >17</text>
<text x="22.6" y="671.3" fill="#222" text-anchor="middle" style="font-size:20.5px;" textLength="21.0" lengthAdjust="spacingAndGlyphs" >18</text>
<text x="22.6" y="702.9" fill="#222" text-anchor="middle" style="font-size:20.5px;" textLength="21.0" lengthAdjust="spacingAndGlyphs" >19</text>
<text x="22.6" y="734.2" fill="#222" text-anchor="middle" style="font-size:20.5px;" textLength="21.0" lengthAdjust="spacingAndGlyphs" >20</text>
<text x="22.6" y="765.8" fill="#222" text-anchor="middle" style="font-size:20.5px;" textLength="21.0" lengthAdjust="spacingAndGlyphs" >21</text>
<text x="22.6" y="797.5" fill="#222" text-anchor="middle" style="font-size:20.5px;" textLength="21.0" lengthAdjust="spacingAndGlyphs" >22</text>
<text x="22.6" y="828.7" fill="#222" text-anchor="middle" style="font-size:20.5px;" textLength="21.0" lengthAdjust="spacingAndGlyphs" >23</text>
<text x="22.6" y="859.6" fill="#222" text-anchor="middle" style="font-size:20.5px;" textLength="21.0" lengthAdjust="spacingAndGlyphs" >24</text>
<text x="22.6" y="890.9" fill="#222" text-anchor="middle" style="font-size:20.5px;" textLength="21.0" lengthAdjust="spacingAndGlyphs" >25</text>
<text x="22.6" y="922.2" fill="#222" text-anchor="middle" style="font-size:20.5px;" textLength="21.0" lengthAdjust="spacingAndGlyphs" >26</text>
<text x="22.6" y="953.5" fill="#222" text-anchor="middle" style="font-size:20.5px;" textLength="21.0" lengthAdjust="spacingAndGlyphs" >27</text>
<text x="22.6" y="984.9" fill="#222" text-anchor="middle" style="font-size:20.5px;" textLength="21.0" lengthAdjust="spacingAndGlyphs" >28</text>
<text x="22.6" y="1016.3" fill="#222" text-anchor="middle" style="font-size:20.5px;" textLength="21.0" lengthAdjust="spacingAndGlyphs" >29</text>
<text x="22.6" y="1047.7" fill="#217346" text-anchor="middle" style="font-size:20.5px;" textLength="21.0" lengthAdjust="spacingAndGlyphs" >30</text>
<text x="22.6" y="1079.3" fill="#222" text-anchor="middle" style="font-size:20.5px;" textLength="21.0" lengthAdjust="spacingAndGlyphs" >31</text>
<text x="22.6" y="1110.2" fill="#222" text-anchor="middle" style="font-size:20.5px;" textLength="21.0" lengthAdjust="spacingAndGlyphs" >32</text>
<text x="22.6" y="1141.4" fill="#222" text-anchor="middle" style="font-size:20.5px;" textLength="21.0" lengthAdjust="spacingAndGlyphs" >33</text>
<text x="22.6" y="1172.1" fill="#222" text-anchor="middle" style="font-size:20.5px;" textLength="21.0" lengthAdjust="spacingAndGlyphs" >34</text>
<text x="22.6" y="1203.2" fill="#222" text-anchor="middle" style="font-size:20.5px;" textLength="21.0" lengthAdjust="spacingAndGlyphs" >35</text>
<text x="22.6" y="1233.9" fill="#222" text-anchor="middle" style="font-size:20.5px;" textLength="21.0" lengthAdjust="spacingAndGlyphs" >36</text>
<text x="22.6" y="1264.8" fill="#222" text-anchor="middle" style="font-size:20.5px;" textLength="21.0" lengthAdjust="spacingAndGlyphs" >37</text>
<text x="22.6" y="1295.7" fill="#222" text-anchor="middle" style="font-size:20.5px;" textLength="21.0" lengthAdjust="spacingAndGlyphs" >38</text>
<text x="22.6" y="1326.6" fill="#222" text-anchor="middle" style="font-size:20.5px;" textLength="21.0" lengthAdjust="spacingAndGlyphs" >39</text>
<text x="22.6" y="1357.5" fill="#222" text-anchor="middle" style="font-size:20.5px;" textLength="21.0" lengthAdjust="spacingAndGlyphs" >40</text>
<text x="22.6" y="1388.4" fill="#222" text-anchor="middle" style="font-size:20.5px;" textLength="21.0" lengthAdjust="spacingAndGlyphs" >41</text>
<text x="22.6" y="1419.3" fill="#222" text-anchor="middle" style="font-size:20.5px;" textLength="21.0" lengthAdjust="spacingAndGlyphs" >42</text>
<text x="22.6" y="1450.2" fill="#222" text-anchor="middle" style="font-size:20.5px;" textLength="21.0" lengthAdjust="spacingAndGlyphs" >43</text>
<text x="22.6" y="1481.1" fill="#222" text-anchor="middle" style="font-size:20.5px;" textLength="21.0" lengthAdjust="spacingAndGlyphs" >44</text>
<text x="22.6" y="1512.0" fill="#222" text-anchor="middle" style="font-size:20.5px;" textLength="21.0" lengthAdjust="spacingAndGlyphs" >45</text>
<text x="22.6" y="1543.0" fill="#222" text-anchor="middle" style="font-size:20.5px;" textLength="21.0" lengthAdjust="spacingAndGlyphs" >46</text>
</g>
<rect x="42.4" y="1024.3" width="3.0" height="31.4" fill="#217346" />
<rect x="325.8" y="521.3" width="1505.5" height="895.0" fill="#fff" stroke="#d9d9d9" stroke-width="1.8" />
<text x="1078.0" y="566.0" fill="#595959" text-anchor="middle" style="font-size:26px;" textLength="366.0" lengthAdjust="spacingAndGlyphs" >Registered HMO's in Jesmond</text>
<text x="369.9" y="1322.6" fill="#595959" style="font-size:16px;" textLength="9.9" lengthAdjust="spacingAndGlyphs" >0</text>
<text x="350.2" y="1251.0" fill="#595959" style="font-size:16px;" textLength="29.6" lengthAdjust="spacingAndGlyphs" >100</text>
<text x="350.2" y="1179.4" fill="#595959" style="font-size:16px;" textLength="29.6" lengthAdjust="spacingAndGlyphs" >200</text>
<text x="350.2" y="1107.8" fill="#595959" style="font-size:16px;" textLength="29.6" lengthAdjust="spacingAndGlyphs" >300</text>
<text x="350.2" y="1036.2" fill="#595959" style="font-size:16px;" textLength="29.6" lengthAdjust="spacingAndGlyphs" >400</text>
<text x="350.2" y="964.6" fill="#595959" style="font-size:16px;" textLength="29.6" lengthAdjust="spacingAndGlyphs" >500</text>
<text x="350.2" y="893.0" fill="#595959" style="font-size:16px;" textLength="29.6" lengthAdjust="spacingAndGlyphs" >600</text>
<text x="350.2" y="821.4" fill="#595959" style="font-size:16px;" textLength="29.6" lengthAdjust="spacingAndGlyphs" >700</text>
<text x="350.2" y="749.8" fill="#595959" style="font-size:16px;" textLength="29.6" lengthAdjust="spacingAndGlyphs" >800</text>
<text x="350.2" y="678.2" fill="#595959" style="font-size:16px;" textLength="29.6" lengthAdjust="spacingAndGlyphs" >900</text>
<text x="340.4" y="606.6" fill="#595959" style="font-size:16px;" textLength="39.4" lengthAdjust="spacingAndGlyphs" >1000</text>
<line x1="397.3" y1="1317.3" x2="1806.4" y2="1317.3" stroke="#d9d9d9" stroke-width="1.6" />
<text x="749.8" y="1347.6" fill="#595959" text-anchor="middle" style="font-size:16.5px;" textLength="120.5" lengthAdjust="spacingAndGlyphs" >North Jesmond</text>
<text x="1453.7" y="1347.6" fill="#595959" text-anchor="middle" style="font-size:16.5px;" textLength="121.0" lengthAdjust="spacingAndGlyphs" >South Jesmond</text>
<rect x="1000.0" y="1378.0" width="28.7" height="16.0" fill="#a9d18e" />
<text x="1035.0" y="1392.0" fill="#595959" style="font-size:16.5px;" textLength="39.3" lengthAdjust="spacingAndGlyphs" >2018</text>
<text x="1104.7" y="1392.0" fill="#595959" style="font-size:16.5px;" textLength="39.3" lengthAdjust="spacingAndGlyphs" >2019</text>
<rect x="1148.5" y="1378.0" width="28.5" height="16.0" fill="#2e75b6" />
<use href="#house" x="440.7" y="888.7" width="302.2" height="427.2" style="--d:#79a55b;--m:#6e9f4f;--a:#a8c694;--b:#97ba80;--c:#8bb272;--l:#d3e0ca;--k:#bdd3af;--q:#dfe9d8;--q2:#cfdfc4;--g:#b1cc9f;--s:#9dbf87;--x:#5d9642;--t:#b4cda3"/>
<use href="#house" x="761.8" y="1007.6" width="221.0" height="311.5" style="--d:#587bb9;--m:#4d70b3;--a:#92a7d3;--b:#7f97cb;--c:#7089c3;--l:#c7d2e8;--k:#b0c0e0;--q:#d9e1f0;--q2:#c5d0e8;--g:#a0b3da;--s:#869fd0;--x:#3f63ad;--t:#a3b6dc"/>
<use href="#house" x="1073.2" y="641.4" width="403.0" height="677.2" style="--d:#79a55b;--m:#6e9f4f;--a:#a8c694;--b:#97ba80;--c:#8bb272;--l:#d3e0ca;--k:#bdd3af;--q:#dfe9d8;--q2:#cfdfc4;--g:#b1cc9f;--s:#9dbf87;--x:#5d9642;--t:#b4cda3"/>
<rect x="1468.0" y="887.5" width="9.5" height="407.5" fill="#fff" />
<use href="#house" x="1485.5" y="841.7" width="283.9" height="479.7" style="--d:#587bb9;--m:#4d70b3;--a:#92a7d3;--b:#7f97cb;--c:#7089c3;--l:#c7d2e8;--k:#b0c0e0;--q:#d9e1f0;--q2:#c5d0e8;--g:#a0b3da;--s:#869fd0;--x:#3f63ad;--t:#a3b6dc"/>
<rect x="2031.5" y="1023.0" width="111.5" height="33.7" fill="none" stroke="#217346" stroke-width="2.6" />
<rect x="2136.7" y="1050.7" width="9.5" height="9.5" fill="#fff" />
<rect x="2138.2" y="1052.1" width="7.3" height="7.2" fill="#217346" />
<rect x="2527.0" y="459.0" width="29.3" height="1044.0" fill="#d9d9d9" />
<rect x="2527.3" y="430.0" width="28.7" height="29.0" fill="#fff" stroke="#c6c6c6" stroke-width="1.4" />
<path d="M2534.5 448 H2549 L2541.8 441Z" fill="#777" />
<rect x="2527.6" y="716.8" width="28.1" height="784.7" fill="#fff" stroke="#ababab" stroke-width="1.6" />
<rect x="2527.3" y="1504.0" width="28.7" height="28.3" fill="#fff" stroke="#c6c6c6" stroke-width="1.4" />
<path d="M2534.5 1515 H2549 L2541.8 1522Z" fill="#777" />
<rect x="0.0" y="1532.0" width="2560.0" height="40.0" fill="#e6e6e6" />
<line x1="0.0" y1="1532.3" x2="2524.0" y2="1532.3" stroke="#ababab" stroke-width="1.8" />
<rect x="136.5" y="1531.0" width="103.0" height="37.0" fill="#fff" />
<line x1="136.2" y1="1532.0" x2="136.2" y2="1568.0" stroke="#c6c6c6" stroke-width="1.3" />
<line x1="239.8" y1="1532.0" x2="239.8" y2="1568.0" stroke="#c6c6c6" stroke-width="1.3" />
<rect x="136.0" y="1566.5" width="104.3" height="2.5" fill="#217346" />
<text x="147.8" y="1558.8" fill="#217346" style="font-size:24.5px;font-weight:bold;" textLength="78.5" lengthAdjust="spacingAndGlyphs" >Sheet1</text>
<path d="M39.3 1543.8 V1559.6 L32 1551.7Z" fill="#c8c8c8" />
<path d="M71.8 1543.8 V1559.6 L79.3 1551.7Z" fill="#c8c8c8" />
<circle cx="301.4" cy="1553" r="14" fill="none" stroke="#8a8a8a" stroke-width="1.7"/>
<path d="M294 1553 H308.8 M301.4 1545.6 V1560.4" fill="none" stroke="#777" stroke-width="3" />
<rect x="1532.0" y="1543.6" width="3.4" height="3.4" fill="#a6a6a6" />
<rect x="1532.0" y="1550.8" width="3.4" height="3.4" fill="#a6a6a6" />
<rect x="1532.0" y="1558.0" width="3.4" height="3.4" fill="#a6a6a6" />
<rect x="1585.0" y="1537.5" width="911.0" height="28.8" fill="#d9d9d9" />
<rect x="1556.3" y="1537.8" width="29.0" height="28.2" fill="#fff" stroke="#c6c6c6" stroke-width="1.4" />
<path d="M1575 1544.8 V1559 L1567.8 1551.9Z" fill="#666" />
<rect x="2020.0" y="1538.0" width="473.3" height="27.8" fill="#fff" stroke="#ababab" stroke-width="1.6" />
<rect x="2495.8" y="1537.8" width="28.6" height="28.2" fill="#fff" stroke="#c6c6c6" stroke-width="1.4" />
<path d="M2506.5 1544.8 V1559 L2513.7 1551.9Z" fill="#666" />
<line x1="0.0" y1="1572.3" x2="2560.0" y2="1572.3" stroke="#bdbdbd" stroke-width="1.8" />
<rect x="0.0" y="1573.2" width="2560.0" height="58.8" fill="#f3f2f1" />
<text x="26.0" y="1610.3" fill="#666" style="font-size:20px;" textLength="52.5" lengthAdjust="spacingAndGlyphs" >Ready</text>
<rect x="1970.3" y="1573.2" width="78.5" height="58.8" fill="#c8c6c4" />
<rect x="1997.5" y="1590.5" width="23.0" height="22.5" fill="none" stroke="#2b2b2b" stroke-width="2" />
<path d="M2005.2 1590.5 V1613.0 M2012.8 1590.5 V1613.0 M1997.5 1598.0 H2020.5 M1997.5 1605.5 H2020.5" fill="none" stroke="#2b2b2b" stroke-width="1.7" />
<rect x="2076.5" y="1590.5" width="24.0" height="22.5" fill="none" stroke="#444" stroke-width="1.7" />
<rect x="2081.5" y="1595.0" width="14.0" height="13.5" fill="none" stroke="#444" stroke-width="1.5" />
<path d="M2084.5 1599.0 H2092.5 M2084.5 1602.0 H2092.5 M2084.5 1605.0 H2092.5" fill="none" stroke="#444" stroke-width="1.3" />
<rect x="2155.0" y="1590.5" width="24.0" height="22.5" fill="none" stroke="#444" stroke-width="1.7" />
<path d="M2163 1590.5 V1603.3 M2170.3 1590.5 V1603.3 H2155" fill="none" stroke="#444" stroke-width="1.6" />
<line x1="2218.0" y1="1601.6" x2="2232.0" y2="1601.6" stroke="#555" stroke-width="1.5" />
<line x1="2242.6" y1="1601.6" x2="2428.0" y2="1601.6" stroke="#a8a8a8" stroke-width="1.5" />
<line x1="2335.0" y1="1596.5" x2="2335.0" y2="1606.5" stroke="#a8a8a8" stroke-width="1.5" />
<rect x="2318.8" y="1591.5" width="9.2" height="20.5" fill="#777" />
<path d="M2438 1601.6 H2452 M2445 1594.6 V1608.6" fill="none" stroke="#555" stroke-width="1.5" />
<text x="2488.0" y="1610.3" fill="#666" style="font-size:20px;" textLength="35.8" lengthAdjust="spacingAndGlyphs" >87%</text>
<rect x="0.0" y="1632.0" width="2560.0" height="12.0" fill="#0a0a0a" />
<rect x="0.0" y="1632.0" width="90.0" height="12.0" fill="#2a071f" />
<rect x="90.0" y="1632.0" width="643.6" height="12.0" fill="#efefef" />
<line x1="0.0" y1="1632.3" x2="733.6" y2="1632.3" stroke="#c8c8c8" stroke-width="1" />
<rect x="1380.0" y="1632.0" width="88.5" height="12.0" fill="#3c3c3c" />
<rect x="2550.5" y="1632.0" width="1.5" height="12.0" fill="#666" />
<rect x="0.0" y="0.0" width="2560.0" height="63.8" fill="#217346" />
<g fill="#206741" clip-path="url(#tbclip)">
<rect x="1702.9" y="0" width="7.1" height="29.7"/>
<rect x="1716.2" y="0" width="7.2" height="43.2"/>
<rect x="1729.2" y="0" width="7.3" height="31.7"/>
<rect x="1742.2" y="0" width="7.5" height="59.9"/>
<rect x="1757" y="0" width="7.7" height="37.8"/>
<rect x="1869.8" y="0" width="24.0" height="64"/>
<rect x="1907.2" y="0" width="3.3" height="64"/>
<rect x="1916.2" y="0" width="3.5" height="64"/>
<rect x="1927.4" y="0" width="3.2" height="61.4"/>
<rect x="1938.7" y="0" width="3.0" height="55.6"/>
<rect x="1947.9" y="0" width="3.2" height="48.9"/>
<rect x="1957.1" y="0" width="3.3" height="40.3"/>
<rect x="1968.4" y="0" width="3.5" height="27.8"/>
<rect x="1978" y="0" width="3.5" height="11.5"/>
<path d="M1792.5 0 H1805.9 V25.9 Q1796 12 1792.5 0Z"/>
<path d="M1826.5 0 H1851 V64 L1826.5 48.9Z"/>
<circle cx="2022" cy="-4" r="27"/>
<circle cx="2119.4" cy="47.5" r="10.4"/>
</g>
<g fill="none" stroke="#206741" clip-path="url(#tbclip)">
<circle cx="2119.4" cy="42.5" r="33" stroke-width="7.3"/>
<circle cx="2286.3" cy="-4" r="100.3" stroke-width="12"/>
<g clip-path="url(#ringclip)" stroke-width="7">
<line x1="2189" y1="0" x2="2259" y2="65.5"/>
<line x1="2210" y1="0" x2="2281" y2="66.5"/>
<line x1="2233" y1="0" x2="2304" y2="66.5"/>
<line x1="2254" y1="0" x2="2325" y2="66.5"/>
</g>
<line x1="2478" y1="-9" x2="2420" y2="37.5" stroke-width="8"/>
<line x1="2510" y1="-10" x2="2445.7" y2="52" stroke-width="8"/>
<line x1="2541" y1="-10" x2="2460" y2="68" stroke-width="8"/>
<line x1="2570" y1="-8" x2="2488" y2="68" stroke-width="8"/>
</g>
<text x="28.0" y="40.0" fill="#fff" style="font-size:21.5px;" textLength="94.0" lengthAdjust="spacingAndGlyphs" >AutoSave</text>
<rect x="134.0" y="17.0" width="70.0" height="28.5" fill="none" stroke="#fff" stroke-width="1.6" rx="14.3" />
<circle cx="148.5" cy="31.2" r="7.2" fill="#fff"/>
<text x="169.5" y="38.5" fill="#fff" style="font-size:19px;" textLength="24.5" lengthAdjust="spacingAndGlyphs" >Off</text>
<path d="M251 19 H279 V46.5 H255.5 L251 42 Z M256 19 V30 H274 V19 M258 46.5 V37.5 H272 V46.5" fill="none" stroke="#fff" stroke-width="1.8" stroke-linejoin="miter"/>
<path d="M340.1 17.8 V30.5 H352.6 M340.6 30 L349.2 21.4 A9.6 9.6 0 0 1 362.9 34.9 L349.9 47.3" fill="none" stroke="#fff" stroke-width="1.8" stroke-linecap="butt"/>
<path d="M453.6 17.8 V30.5 H441.1 M453.1 30 L444.5 21.4 A9.6 9.6 0 0 0 430.8 34.9 L443.8 47.3" fill="none" stroke="#5f9c7b" stroke-width="1.8" />
<line x1="519.0" y1="26.0" x2="532.4" y2="26.0" stroke="#fff" stroke-width="1.6" />
<path d="M520.4 31 L525.9 36.4 L531.4 31" fill="none" stroke="#fff" stroke-width="1.8" />
<text x="700.5" y="38.5" fill="#fff" style="font-size:21.5px;" textLength="76.5" lengthAdjust="spacingAndGlyphs" >hmo (1)</text>
<path d="M789 26 H802 L795.5 32.5Z" fill="#fff" />
<rect x="938.0" y="11.0" width="684.0" height="41.0" fill="#a0ceb4" />
<circle cx="989.5" cy="27" r="8.6" fill="none" stroke="#217346" stroke-width="1.8"/>
<line x1="983.5" y1="33.5" x2="973.5" y2="43.5" stroke="#217346" stroke-width="1.8" />
<text x="1029.0" y="39.5" fill="#217346" style="font-size:21.5px;" textLength="65.5" lengthAdjust="spacingAndGlyphs" >Search</text>
<text x="2061.0" y="41.0" fill="#fff" style="font-size:21.5px;" textLength="125.0" lengthAdjust="spacingAndGlyphs" >Lougan Alasi</text>
<circle cx="2226.5" cy="32" r="22" fill="#6b7a85"/>
<text x="2226.5" y="39.5" fill="#e6e6e6" text-anchor="middle" style="font-size:19px;" >LA</text>
<rect x="2295.0" y="23.0" width="24.0" height="17.0" fill="none" stroke="#fff" stroke-width="1.6" />
<line x1="2295.0" y1="27.5" x2="2319.0" y2="27.5" stroke="#fff" stroke-width="1.6" />
<path d="M2307 37 V30.5 M2303 33.5 L2307 29.8 L2311 33.5" fill="none" stroke="#fff" stroke-width="1.5" />
<line x1="2370.0" y1="32.0" x2="2390.0" y2="32.0" stroke="#fff" stroke-width="1.6" />
<rect x="2443.5" y="27.0" width="13.5" height="13.0" fill="none" stroke="#fff" stroke-width="1.6" />
<path d="M2447.5 27 V23 H2461 V36 H2457" fill="none" stroke="#fff" stroke-width="1.6" />
<path d="M2515.5 23 L2533 40.5 M2533 23 L2515.5 40.5" fill="none" stroke="#fff" stroke-width="1.8" />
<rect x="0.0" y="63.8" width="2560.0" height="284.6" fill="#f3f2f1" />
<text x="31.0" y="100.8" fill="#444" style="font-size:24.5px;" textLength="37.0" lengthAdjust="spacingAndGlyphs" >File</text>
<text x="247.0" y="100.8" fill="#444" style="font-size:24.5px;" textLength="61.0" lengthAdjust="spacingAndGlyphs" >Insert</text>
<text x="359.0" y="100.8" fill="#444" style="font-size:24.5px;" textLength="58.5" lengthAdjust="spacingAndGlyphs" >Draw</text>
<text x="469.0" y="100.8" fill="#444" style="font-size:24.5px;" textLength="136.0" lengthAdjust="spacingAndGlyphs" >Page Layout</text>
<text x="657.0" y="100.8" fill="#444" style="font-size:24.5px;" textLength="101.0" lengthAdjust="spacingAndGlyphs" >Formulas</text>
<text x="810.0" y="100.8" fill="#444" style="font-size:24.5px;" textLength="51.0" lengthAdjust="spacingAndGlyphs" >Data</text>
<text x="913.0" y="100.8" fill="#444" style="font-size:24.5px;" textLength="76.0" lengthAdjust="spacingAndGlyphs" >Review</text>
<text x="1040.0" y="100.8" fill="#444" style="font-size:24.5px;" textLength="53.0" lengthAdjust="spacingAndGlyphs" >View</text>
<text x="1143.0" y="100.8" fill="#444" style="font-size:24.5px;" textLength="51.0" lengthAdjust="spacingAndGlyphs" >Help</text>
<text x="126.5" y="100.8" fill="#3b3a39" style="font-size:24.5px;font-weight:bold;" textLength="69.5" lengthAdjust="spacingAndGlyphs" >Home</text>
<rect x="126.0" y="110.0" width="71.0" height="6.0" fill="#217346" />
<rect x="2211.0" y="69.5" width="125.0" height="43.5" fill="#fff" stroke="#d2d0ce" stroke-width="1.2" rx="2" />
<rect x="2352.5" y="69.5" width="184.5" height="43.5" fill="#fff" stroke="#d2d0ce" stroke-width="1.2" rx="2" />
<text x="2256.0" y="101.0" fill="#217346" style="font-size:24.5px;font-weight:bold;" textLength="64.0" lengthAdjust="spacingAndGlyphs" >Share</text>
<text x="2397.0" y="101.0" fill="#217346" style="font-size:24.5px;font-weight:bold;" textLength="123.0" lengthAdjust="spacingAndGlyphs" >Comments</text>
<path d="M2233 87 H2226 V102 H2243 V97 M2231 97 C2232 89 2237 86.5 2242 86.5 M2238.5 81.5 L2245 87 L2238.5 92.5" fill="none" stroke="#217346" stroke-width="1.7" stroke-linejoin="miter"/>
<path d="M2369 82.5 H2388 V96 H2377 L2372.5 100.5 V96 H2369 Z" fill="none" stroke="#217346" stroke-width="1.7" stroke-linejoin="miter"/>
<line x1="283.3" y1="127.0" x2="283.3" y2="340.0" stroke="#c8c6c4" stroke-width="1.6" />
<line x1="763.8" y1="127.0" x2="763.8" y2="340.0" stroke="#c8c6c4" stroke-width="1.6" />
<line x1="1194.3" y1="127.0" x2="1194.3" y2="340.0" stroke="#c8c6c4" stroke-width="1.6" />
<line x1="1503.0" y1="127.0" x2="1503.0" y2="340.0" stroke="#c8c6c4" stroke-width="1.6" />
<line x1="1884.6" y1="127.0" x2="1884.6" y2="340.0" stroke="#c8c6c4" stroke-width="1.6" />
<line x1="2138.0" y1="127.0" x2="2138.0" y2="340.0" stroke="#c8c6c4" stroke-width="1.6" />
<line x1="2257.3" y1="127.0" x2="2257.3" y2="340.0" stroke="#c8c6c4" stroke-width="1.6" />
<line x1="2404.0" y1="127.0" x2="2404.0" y2="340.0" stroke="#c8c6c4" stroke-width="1.6" />
<rect x="59.2" y="156.2" width="36.8" height="42.8" fill="#f9dc90" stroke="#e07410" stroke-width="2.5" />
<rect x="63.9" y="161.0" width="28.1" height="33.3" fill="#fafafa" />
<path d="M66.5 161 V154.5 H72.3 Q72.5 148.8 78 148.8 Q83.5 148.8 83.7 154.5 H89.5 V161 Z" fill="#fafafa" stroke="#797775" stroke-width="1.7" />
<rect x="81.0" y="169.0" width="29.0" height="36.0" fill="#f3f2f1" />
<rect x="83.5" y="171.5" width="24.3" height="31.3" fill="#fafafa" stroke="#3b3a39" stroke-width="2.1" />
<line x1="36.0" y1="219.5" x2="121.0" y2="219.5" stroke="#c8c6c4" stroke-width="1.4" />
<text x="53.0" y="248.0" fill="#444" style="font-size:21.5px;" textLength="49.7" lengthAdjust="spacingAndGlyphs" >Paste</text>
<path d="M72.5 267.8 L77.0 272.2 L81.5 267.8" fill="none" stroke="#444" stroke-width="1.8" stroke-linecap="round" stroke-linejoin="round"/>
<path d="M171.5 146 L172.9 146.2 L179.6 159.5 L183.4 168.3 L181.8 169 L177.2 160 Z" fill="#3b3a39" />
<path d="M183.8 146 L182.4 146.2 L175.7 159.5 L171.9 168.3 L173.5 169 L178.1 160 Z" fill="#3b3a39" />
<circle cx="172.3" cy="172.3" r="3.2" fill="none" stroke="#2b88d8" stroke-width="1.6"/><circle cx="183.3" cy="172.3" r="3.2" fill="none" stroke="#2b88d8" stroke-width="1.6"/>
<path d="M166 231 H158.5 V207.2 H169.5 L172 209.5" fill="none" stroke="#3b3a39" stroke-width="2" />
<path d="M169.8 213 H180 L186.3 219.3 V235 H169.8 Z" fill="#fafafa" stroke="#3b3a39" stroke-width="2" />
<path d="M180 213 V219.3 H186.3" fill="none" stroke="#3b3a39" stroke-width="1.6" />
<line x1="174.0" y1="225.3" x2="182.0" y2="225.3" stroke="#605e5c" stroke-width="1.5" />
<line x1="174.0" y1="229.3" x2="182.0" y2="229.3" stroke="#605e5c" stroke-width="1.5" />
<path d="M223.2 218.4 L227.7 222.9 L232.2 218.4" fill="none" stroke="#444" stroke-width="1.8" stroke-linecap="round" stroke-linejoin="round"/>
<path d="M164 279 Q171 278 175 273.8 L185.5 284.3 L176.1 292.5 Z" fill="#fafafa" stroke="#e07410" stroke-width="1.9" stroke-linejoin="round"/>
<path d="M169.7 283.7 Q177 286.5 184 285.6 L176.1 292.5 Z" fill="#f9dc90" stroke="#e07410" stroke-width="1.5" stroke-linejoin="round"/>
<path d="M181.5 278 L188.8 267.5 Q191 265.8 192.3 267.3 Q193.8 268.8 192 271 L184.5 280.5" fill="#fafafa" stroke="#3b3a39" stroke-width="1.9" />
<path d="M177.2 272.6 L187.3 282.8 Q188 284.2 186.7 285.2 Q185.3 286.2 184.2 285 L174.4 275 Q174 273.5 175 272.7 Q176 271.8 177.2 272.6Z" fill="#fafafa" stroke="#3b3a39" stroke-width="1.9" />
<text x="84.0" y="340.0" fill="#444" style="font-size:20.5px;" textLength="82.7" lengthAdjust="spacingAndGlyphs" >Clipboard</text>
<path d="M255.0 334.7 V326.2 H267.5 M257.5 329 L268.9 340 M269.0 331.7 V340 H260.9" fill="none" stroke="#444" stroke-width="1.7" />
<rect x="307.3" y="135.5" width="340.0" height="50.5" fill="#fff" stroke="#c8c6c4" stroke-width="1.5" />
<rect x="648.8" y="135.5" width="92.7" height="50.5" fill="#fff" stroke="#c8c6c4" stroke-width="1.5" />
<text x="311.7" y="170.0" fill="#444" style="font-size:22.5px;" textLength="61.8" lengthAdjust="spacingAndGlyphs" >Calibri</text>
<text x="654.0" y="170.0" fill="#444" style="font-size:22.5px;" textLength="22.0" lengthAdjust="spacingAndGlyphs" >11</text>
<path d="M630.2 160.1 L635.0 164.9 L639.8 160.1" fill="none" stroke="#444" stroke-width="1.8" stroke-linecap="round" stroke-linejoin="round"/>
<path d="M725.2 160.1 L730.0 164.9 L734.8 160.1" fill="none" stroke="#444" stroke-width="1.8" stroke-linecap="round" stroke-linejoin="round"/>
<text x="350.4" y="228.5" fill="#3b3a39" text-anchor="middle" style="font-size:27.5px;font-weight:bold;" textLength="14.2" lengthAdjust="spacingAndGlyphs" >B</text>
<text x="436" y="228.3" text-anchor="middle" fill="#444" style="font-size:28.5px;font-style:italic;font-family:'Liberation Serif',serif;">I</text>
<text x="515.3" y="226.6" fill="#444" text-anchor="middle" style="font-size:24.5px;" textLength="15.5" lengthAdjust="spacingAndGlyphs" >U</text>
<line x1="506.5" y1="231.3" x2="523.5" y2="231.3" stroke="#444" stroke-width="1.6" />
<path d="M550.2 218.3 L555.0 223.1 L559.8 218.3" fill="none" stroke="#444" stroke-width="1.8" stroke-linecap="round" stroke-linejoin="round"/>
<path d="M599 235 L609.5 208 L612 208 L622.5 235 M602.8 226 H618.6" fill="none" stroke="#444" stroke-width="1.7" stroke-linejoin="miter"/>
<path d="M619.5 212.5 L623.5 208.5 L627.5 212.5" fill="none" stroke="#2b88d8" stroke-width="1.8" />
<path d="M686.5 235 L694.5 214.5 L696.8 214.5 L704.8 235 M689.5 228 H701.8" fill="none" stroke="#444" stroke-width="1.7" />
<path d="M705.5 208.5 L709.5 212.5 L713.5 208.5" fill="none" stroke="#2b88d8" stroke-width="1.8" />
<g stroke="#444" stroke-width="1.5" stroke-dasharray="1.6 1.9"><path d="M329.5 266.5 H357 M329.5 266.5 V289 M357 266.5 V289 M343.2 266.5 V289 M329.5 279 H357" fill="none"/></g>
<line x1="329.0" y1="292.2" x2="357.5" y2="292.2" stroke="#222" stroke-width="2" />
<path d="M378.2 279.1 L383.0 283.9 L387.8 279.1" fill="none" stroke="#444" stroke-width="1.8" stroke-linecap="round" stroke-linejoin="round"/>
<path d="M433.5 268.5 L426 278 L434.5 285.5 L443 275.5 L436 268 M434 274 V267.5 Q434 265.8 436 266 Q437.5 266.3 437.5 268 V271" fill="none" stroke="#444" stroke-width="1.5" stroke-linejoin="round"/>
<path d="M443.5 274 Q448.5 278 446.5 284.5 Q445 280 443.5 278 Z" fill="#1e6fb8" stroke="#1e6fb8" stroke-width="1" />
<rect x="420.7" y="288.3" width="30.0" height="6.7" fill="#ffff00" />
<path d="M470.2 279.1 L475.0 283.9 L479.8 279.1" fill="none" stroke="#444" stroke-width="1.8" stroke-linecap="round" stroke-linejoin="round"/>
<path d="M518 286 L526 266.5 L528.2 266.5 L536.2 286 M521 279.5 H533.2" fill="none" stroke="#444" stroke-width="1.7" />
<rect x="512.3" y="288.3" width="30.0" height="6.7" fill="#ff0000" />
<path d="M562.0 279.1 L566.7 283.9 L571.5 279.1" fill="none" stroke="#444" stroke-width="1.8" stroke-linecap="round" stroke-linejoin="round"/>
<text x="490.0" y="340.0" fill="#444" style="font-size:20.5px;" textLength="37.0" lengthAdjust="spacingAndGlyphs" >Font</text>
<path d="M735.7 334.7 V326.2 H748.2 M738.2 329 L749.6 340 M749.7 331.7 V340 H741.6" fill="none" stroke="#444" stroke-width="1.7" />
<rect x="960.0" y="135.0" width="85.7" height="51.7" fill="#c8c6c4" />
<line x1="817.9" y1="146.7" x2="844.0" y2="146.7" stroke="#3b3a39" stroke-width="2" />
<line x1="821.5" y1="154.4" x2="839.5" y2="154.4" stroke="#3b3a39" stroke-width="2" />
<line x1="817.9" y1="162.2" x2="844.0" y2="162.2" stroke="#3b3a39" stroke-width="2" />
<line x1="903.9" y1="152.3" x2="930.0" y2="152.3" stroke="#3b3a39" stroke-width="2" />
<line x1="907.5" y1="160.0" x2="925.5" y2="160.0" stroke="#3b3a39" stroke-width="2" />
<line x1="903.9" y1="167.7" x2="930.0" y2="167.7" stroke="#3b3a39" stroke-width="2" />
<line x1="990.4" y1="160.0" x2="1016.5" y2="160.0" stroke="#3b3a39" stroke-width="2" />
<line x1="994.0" y1="167.7" x2="1012.0" y2="167.7" stroke="#3b3a39" stroke-width="2" />
<line x1="990.4" y1="174.6" x2="1016.5" y2="174.6" stroke="#3b3a39" stroke-width="2" />
<text x="1078.0" y="163.0" fill="#444" style="font-size:20px;" textLength="23.0" lengthAdjust="spacingAndGlyphs" >ab</text>
<text x="1078.0" y="175.0" fill="#444" style="font-size:20px;" textLength="10.0" lengthAdjust="spacingAndGlyphs" >c</text>
<path d="M1103 160 Q1105.5 169.5 1097 169.8 H1091 M1095 165.2 L1090.5 169.8 L1095 174.4" fill="none" stroke="#2b88d8" stroke-width="1.8" />
<line x1="817.9" y1="209.0" x2="844.0" y2="209.0" stroke="#3b3a39" stroke-width="2" />
<line x1="817.9" y1="216.2" x2="836.0" y2="216.2" stroke="#3b3a39" stroke-width="2" />
<line x1="817.9" y1="223.5" x2="844.0" y2="223.5" stroke="#3b3a39" stroke-width="2" />
<line x1="817.9" y1="230.8" x2="836.0" y2="230.8" stroke="#3b3a39" stroke-width="2" />
<line x1="903.9" y1="209.0" x2="930.0" y2="209.0" stroke="#3b3a39" stroke-width="2" />
<line x1="907.5" y1="216.2" x2="925.5" y2="216.2" stroke="#3b3a39" stroke-width="2" />
<line x1="903.9" y1="223.5" x2="930.0" y2="223.5" stroke="#3b3a39" stroke-width="2" />
<line x1="907.5" y1="230.8" x2="925.5" y2="230.8" stroke="#3b3a39" stroke-width="2" />
<line x1="990.4" y1="209.0" x2="1016.5" y2="209.0" stroke="#3b3a39" stroke-width="2" />
<line x1="997.5" y1="216.2" x2="1016.5" y2="216.2" stroke="#3b3a39" stroke-width="2" />
<line x1="990.4" y1="223.5" x2="1016.5" y2="223.5" stroke="#3b3a39" stroke-width="2" />
<line x1="997.5" y1="230.8" x2="1016.5" y2="230.8" stroke="#3b3a39" stroke-width="2" />
<rect x="1068.8" y="206.8" width="26.7" height="26.0" fill="none" stroke="#444" stroke-width="1.5" />
<line x1="1068.8" y1="212.5" x2="1095.5" y2="212.5" stroke="#444" stroke-width="1.3" />
<line x1="1068.8" y1="227.0" x2="1095.5" y2="227.0" stroke="#444" stroke-width="1.3" />
<line x1="1082.0" y1="206.8" x2="1082.0" y2="212.5" stroke="#444" stroke-width="1.3" />
<line x1="1082.0" y1="227.0" x2="1082.0" y2="232.8" stroke="#444" stroke-width="1.3" />
<rect x="1069.5" y="213.2" width="25.3" height="13.1" fill="#fff" stroke="#2b88d8" stroke-width="1.6" />
<path d="M1073 219.7 H1091.5 M1076.5 216.2 L1073 219.7 L1076.5 223.2 M1088 216.2 L1091.5 219.7 L1088 223.2" fill="none" stroke="#2b88d8" stroke-width="1.6" />
<path d="M1134.2 218.3 L1139.0 223.1 L1143.8 218.3" fill="none" stroke="#444" stroke-width="1.8" stroke-linecap="round" stroke-linejoin="round"/>
<line x1="817.9" y1="268.5" x2="844.0" y2="268.5" stroke="#3b3a39" stroke-width="2" />
<line x1="833.0" y1="276.0" x2="844.0" y2="276.0" stroke="#3b3a39" stroke-width="2" />
<line x1="833.0" y1="283.6" x2="844.0" y2="283.6" stroke="#3b3a39" stroke-width="2" />
<line x1="817.9" y1="291.2" x2="844.0" y2="291.2" stroke="#3b3a39" stroke-width="2" />
<path d="M828.5 279.8 H818.6 M823 275.4 L818.6 279.8 L823 284.2" fill="none" stroke="#1e8bd8" stroke-width="2.1" />
<line x1="903.9" y1="268.5" x2="930.0" y2="268.5" stroke="#3b3a39" stroke-width="2" />
<line x1="919.0" y1="276.0" x2="930.0" y2="276.0" stroke="#3b3a39" stroke-width="2" />
<line x1="919.0" y1="283.6" x2="930.0" y2="283.6" stroke="#3b3a39" stroke-width="2" />
<line x1="903.9" y1="291.2" x2="930.0" y2="291.2" stroke="#3b3a39" stroke-width="2" />
<path d="M903.8 279.8 H913.6 M909.2 275.4 L913.6 279.8 L909.2 284.2" fill="none" stroke="#1e8bd8" stroke-width="2.1" />
<text x="0" y="0" fill="#444" style="font-size:19px" transform="translate(996,286) rotate(-50)">ab</text>
<path d="M997.5 293 L1017 274 M1008.5 273.6 H1017.5 V282.6" fill="none" stroke="#1e8bd8" stroke-width="2.1" />
<path d="M1028.0 278.6 L1032.7 283.4 L1037.5 278.6" fill="none" stroke="#444" stroke-width="1.8" stroke-linecap="round" stroke-linejoin="round"/>
<path d="M1078.5 274 L1084.5 280.5 L1078.5 287" fill="none" stroke="#2b88d8" stroke-width="1.8" />
<text x="1087.0" y="287.0" fill="#333" style="font-size:21px;font-weight:bold;" textLength="13.0" lengthAdjust="spacingAndGlyphs" >¶</text>
<path d="M1123.0 279.1 L1127.7 283.9 L1132.5 279.1" fill="none" stroke="#444" stroke-width="1.8" stroke-linecap="round" stroke-linejoin="round"/>
<text x="920.0" y="340.0" fill="#444" style="font-size:20.5px;" textLength="89.0" lengthAdjust="spacingAndGlyphs" >Alignment</text>
<path d="M1166.5 334.7 V326.2 H1179 M1169 329 L1180.4 340 M1180.5 331.7 V340 H1172.4" fill="none" stroke="#444" stroke-width="1.7" />
<rect x="1218.5" y="135.5" width="262.5" height="50.5" fill="#fff" stroke="#c8c6c4" stroke-width="1.5" />
<text x="1223.3" y="170.0" fill="#444" style="font-size:22.5px;" textLength="75.2" lengthAdjust="spacingAndGlyphs" >General</text>
<path d="M1464.2 160.1 L1469.0 164.9 L1473.8 160.1" fill="none" stroke="#444" stroke-width="1.8" stroke-linecap="round" stroke-linejoin="round"/>
<rect x="1241.0" y="211.5" width="28.5" height="17.0" fill="none" stroke="#444" stroke-width="1.7" />
<text x="1245.0" y="225.0" fill="#444" style="font-size:15px;font-weight:bold;" textLength="18.0" lengthAdjust="spacingAndGlyphs" >cc</text>
<g fill="#fff" stroke="#e3821e" stroke-width="1.5"><path d="M1256 223.5 V231.5 A6.7 2.8 0 0 0 1269.4 231.5 V223.5"/><ellipse cx="1262.7" cy="223.5" rx="6.7" ry="2.8"/><path d="M1256 227.7 A6.7 2.8 0 0 0 1269.4 227.7" fill="none"/></g>
<path d="M1289.5 218.3 L1294.3 223.1 L1299.0 218.3" fill="none" stroke="#444" stroke-width="1.8" stroke-linecap="round" stroke-linejoin="round"/>
<text x="1338.8" y="233.6" fill="#444" style="font-size:36.5px;" textLength="28.2" lengthAdjust="spacingAndGlyphs" >%</text>
<path d="M1440.5 209.5 Q1446.8 209.5 1446.8 216.5 Q1446.8 226 1435.5 231.5 L1434.3 230 Q1440.8 226 1441 220.5 Q1435.3 220 1435.3 214.8 Q1435.3 209.5 1440.5 209.5Z" fill="#333" />
<text x="1265.5" y="278.5" fill="#444" style="font-size:16.5px;" textLength="8.8" lengthAdjust="spacingAndGlyphs" >0</text>
<circle cx="1262" cy="277.2" r="1.05" fill="#444"/>
<text x="1255.5" y="294.3" fill="#444" style="font-size:16.5px;" textLength="18.5" lengthAdjust="spacingAndGlyphs" >00</text>
<circle cx="1252" cy="293" r="1.05" fill="#444"/>
<path d="M1262 273.8 H1247 M1251.7 269 L1247 273.8 L1251.7 278.6" fill="none" stroke="#2b88d8" stroke-width="1.8" />
<text x="1341.5" y="278.5" fill="#444" style="font-size:16.5px;" textLength="19.0" lengthAdjust="spacingAndGlyphs" >00</text>
<circle cx="1338.3" cy="277.2" r="1.05" fill="#444"/>
<text x="1351.5" y="294.3" fill="#444" style="font-size:16.5px;" textLength="9.0" lengthAdjust="spacingAndGlyphs" >0</text>
<circle cx="1348" cy="293" r="1.05" fill="#444"/>
<path d="M1332 288.3 H1347 M1342.3 283.5 L1347 288.3 L1342.3 293.1" fill="none" stroke="#2b88d8" stroke-width="1.8" />
<text x="1299.0" y="340.0" fill="#444" style="font-size:20.5px;" textLength="70.0" lengthAdjust="spacingAndGlyphs" >Number</text>
<path d="M1475.0 334.7 V326.2 H1487.5 M1477.5 329 L1488.9 340 M1489.0 331.7 V340 H1480.9" fill="none" stroke="#444" stroke-width="1.7" />
<rect x="1555.5" y="148.5" width="29.3" height="25.0" fill="#fafafa" />
<rect x="1561.0" y="149.0" width="11.0" height="7.0" fill="#f8a0a8" stroke="#e02020" stroke-width="1.6" />
<rect x="1561.0" y="165.0" width="14.5" height="8.0" fill="#f8a0a8" stroke="#e02020" stroke-width="1.6" />
<rect x="1561.0" y="157.2" width="6.8" height="6.8" fill="#8cc4f0" stroke="#1e6fb8" stroke-width="1.6" />
<line x1="1561.0" y1="148.5" x2="1561.0" y2="173.5" stroke="#8a8886" stroke-width="1.2" />
<line x1="1572.0" y1="148.5" x2="1572.0" y2="173.5" stroke="#8a8886" stroke-width="1.2" />
<line x1="1578.0" y1="148.5" x2="1578.0" y2="173.5" stroke="#8a8886" stroke-width="1.2" />
<line x1="1555.5" y1="156.8" x2="1584.8" y2="156.8" stroke="#8a8886" stroke-width="1.2" />
<line x1="1555.5" y1="164.8" x2="1584.8" y2="164.8" stroke="#8a8886" stroke-width="1.2" />
<rect x="1555.5" y="148.5" width="29.3" height="25.0" fill="none" stroke="#333" stroke-width="1.7" />
<rect x="1561.0" y="149.0" width="11.0" height="7.0" fill="#f8a0a8" stroke="#e02020" stroke-width="1.6" />
<rect x="1561.0" y="165.0" width="14.5" height="8.0" fill="#f8a0a8" stroke="#e02020" stroke-width="1.6" />
<rect x="1561.5" y="157.5" width="6.0" height="6.5" fill="#8cc4f0" stroke="#1e6fb8" stroke-width="1.6" />
<text x="1596.7" y="169.8" fill="#444" style="font-size:22.3px;" textLength="230.2" lengthAdjust="spacingAndGlyphs" >Conditional Formatting</text>
<path d="M1835.5 159.6 L1840.2 164.4 L1845.0 159.6" fill="none" stroke="#444" stroke-width="1.8" stroke-linecap="round" stroke-linejoin="round"/>
<rect x="1555.5" y="208.5" width="29.3" height="24.5" fill="#fafafa" />
<rect x="1566.0" y="215.5" width="18.5" height="17.5" fill="#83beec" stroke="#1e6fb8" stroke-width="1.4" />
<line x1="1565.5" y1="208.5" x2="1565.5" y2="233.0" stroke="#8a8886" stroke-width="1.2" />
<line x1="1575.0" y1="208.5" x2="1575.0" y2="233.0" stroke="#8a8886" stroke-width="1.2" />
<line x1="1555.5" y1="215.5" x2="1584.8" y2="215.5" stroke="#8a8886" stroke-width="1.2" />
<line x1="1555.5" y1="225.0" x2="1584.8" y2="225.0" stroke="#8a8886" stroke-width="1.2" />
<rect x="1555.5" y="208.5" width="29.3" height="24.5" fill="none" stroke="#333" stroke-width="1.7" />
<rect x="1566.5" y="216.0" width="17.5" height="16.5" fill="#83beec" stroke="#1e6fb8" stroke-width="1.6" />
<rect x="1557.0" y="230.0" width="18.0" height="6.0" fill="#f3f2f1" />
<path d="M1569 225.5 L1582.5 216.5 Q1585 216 1584.3 218.8 L1572.5 229.5 Z" fill="#f3f2f1" stroke="#333" stroke-width="1.4" />
<path d="M1561 233.5 Q1565 232.5 1566 229 Q1567 225.5 1570.2 226.5 Q1573.5 228.5 1571.5 232 Q1568 236.5 1561 233.5Z" fill="#1e6fb8" />
<text x="1596.7" y="229.8" fill="#444" style="font-size:22.3px;" textLength="154.1" lengthAdjust="spacingAndGlyphs" >Format as Table</text>
<path d="M1760.0 219.4 L1764.8 224.2 L1769.5 219.4" fill="none" stroke="#444" stroke-width="1.8" stroke-linecap="round" stroke-linejoin="round"/>
<rect x="1555.5" y="268.0" width="29.3" height="25.0" fill="#fafafa" />
<line x1="1561.0" y1="268.0" x2="1561.0" y2="293.0" stroke="#8a8886" stroke-width="1.2" />
<line x1="1579.0" y1="268.0" x2="1579.0" y2="293.0" stroke="#8a8886" stroke-width="1.2" />
<line x1="1555.5" y1="273.5" x2="1584.8" y2="273.5" stroke="#8a8886" stroke-width="1.2" />
<line x1="1555.5" y1="288.0" x2="1584.8" y2="288.0" stroke="#8a8886" stroke-width="1.2" />
<rect x="1555.5" y="268.0" width="29.3" height="25.0" fill="none" stroke="#333" stroke-width="1.7" />
<rect x="1561.5" y="274.0" width="17.5" height="14.0" fill="#83beec" stroke="#1e6fb8" stroke-width="1.8" />
<rect x="1557.0" y="289.5" width="17.0" height="6.5" fill="#f3f2f1" />
<path d="M1569 285.5 L1582.5 276.5 Q1585 276 1584.3 278.8 L1572.5 289.5 Z" fill="#f3f2f1" stroke="#333" stroke-width="1.4" />
<path d="M1561 293.5 Q1565 292.5 1566 289 Q1567 285.5 1570.2 286.5 Q1573.5 288.5 1571.5 292 Q1568 296.5 1561 293.5Z" fill="#1e6fb8" />
<text x="1596.7" y="289.5" fill="#444" style="font-size:22.3px;" textLength="100.1" lengthAdjust="spacingAndGlyphs" >Cell Styles</text>
<path d="M1705.7 279.5 L1710.4 284.3 L1715.2 279.5" fill="none" stroke="#444" stroke-width="1.8" stroke-linecap="round" stroke-linejoin="round"/>
<text x="1670.0" y="340.0" fill="#444" style="font-size:20.5px;" textLength="47.5" lengthAdjust="spacingAndGlyphs" >Styles</text>
<rect x="1931.0" y="149.0" width="28.5" height="24.0" fill="#fafafa" />
<line x1="1940.5" y1="149.0" x2="1940.5" y2="173.0" stroke="#8a8886" stroke-width="1.2" />
<line x1="1950.0" y1="149.0" x2="1950.0" y2="173.0" stroke="#8a8886" stroke-width="1.2" />
<line x1="1931.0" y1="156.5" x2="1959.5" y2="156.5" stroke="#8a8886" stroke-width="1.2" />
<line x1="1931.0" y1="166.0" x2="1959.5" y2="166.0" stroke="#8a8886" stroke-width="1.2" />
<rect x="1931.0" y="149.0" width="28.5" height="24.0" fill="none" stroke="#333" stroke-width="1.7" />
<rect x="1945.0" y="156.5" width="14.0" height="9.5" fill="#83beec" stroke="#1e6fb8" stroke-width="1.5" />
<line x1="1950.0" y1="156.5" x2="1950.0" y2="166.0" stroke="#1e6fb8" stroke-width="1.3" />
<rect x="1930.0" y="157.2" width="14.0" height="8.0" fill="#fafafa" />
<path d="M1946 161.2 H1931.5 M1936.3 156.5 L1931.5 161.2 L1936.3 166" fill="none" stroke="#2b88d8" stroke-width="1.7" />
<text x="1972.6" y="170.1" fill="#444" style="font-size:22.3px;" textLength="53.6" lengthAdjust="spacingAndGlyphs" >Insert</text>
<path d="M2067.7 159.0 L2072.4 163.8 L2077.2 159.0" fill="none" stroke="#444" stroke-width="1.8" stroke-linecap="round" stroke-linejoin="round"/>
<rect x="1931.0" y="208.5" width="28.5" height="24.5" fill="#fafafa" />
<line x1="1940.5" y1="208.5" x2="1940.5" y2="233.0" stroke="#8a8886" stroke-width="1.2" />
<line x1="1950.0" y1="208.5" x2="1950.0" y2="233.0" stroke="#8a8886" stroke-width="1.2" />
<line x1="1931.0" y1="216.0" x2="1959.5" y2="216.0" stroke="#8a8886" stroke-width="1.2" />
<line x1="1931.0" y1="225.5" x2="1959.5" y2="225.5" stroke="#8a8886" stroke-width="1.2" />
<rect x="1931.0" y="208.5" width="28.5" height="24.5" fill="none" stroke="#333" stroke-width="1.7" />
<rect x="1947.0" y="214.0" width="14.0" height="14.0" fill="#f3f2f1" />
<rect x="1937.0" y="216.5" width="9.0" height="8.5" fill="#83beec" stroke="#1e6fb8" stroke-width="1.5" />
<path d="M1950.5 216.5 L1958.5 225 M1958.5 216.5 L1950.5 225" fill="none" stroke="#e53935" stroke-width="1.6" />
<text x="1972.6" y="230.2" fill="#444" style="font-size:22.3px;" textLength="63.4" lengthAdjust="spacingAndGlyphs" >Delete</text>
<path d="M2078.1 218.6 L2082.8 223.4 L2087.6 218.6" fill="none" stroke="#444" stroke-width="1.8" stroke-linecap="round" stroke-linejoin="round"/>
<rect x="1937.0" y="271.0" width="28.2" height="23.5" fill="#fafafa" />
<line x1="1944.5" y1="271.0" x2="1944.5" y2="294.5" stroke="#8a8886" stroke-width="1.2" />
<line x1="1957.5" y1="271.0" x2="1957.5" y2="294.5" stroke="#8a8886" stroke-width="1.2" />
<line x1="1937.0" y1="278.5" x2="1965.2" y2="278.5" stroke="#8a8886" stroke-width="1.2" />
<line x1="1937.0" y1="287.5" x2="1965.2" y2="287.5" stroke="#8a8886" stroke-width="1.2" />
<rect x="1937.0" y="271.0" width="28.2" height="23.5" fill="none" stroke="#333" stroke-width="1.7" />
<rect x="1944.5" y="278.5" width="13.0" height="9.0" fill="#83beec" stroke="#1e6fb8" stroke-width="1.5" />
<rect x="1941.0" y="266.0" width="20.0" height="7.0" fill="#f3f2f1" />
<path d="M1942 268.5 H1960 M1942 265.8 V271.2 M1960 265.8 V271.2" fill="none" stroke="#2b88d8" stroke-width="1.5" />
<text x="1978.0" y="290.0" fill="#444" style="font-size:22.3px;" textLength="69.0" lengthAdjust="spacingAndGlyphs" >Format</text>
<path d="M2055.8 278.8 L2060.5 283.6 L2065.2 278.8" fill="none" stroke="#444" stroke-width="1.8" stroke-linecap="round" stroke-linejoin="round"/>
<text x="1991.6" y="340.0" fill="#444" style="font-size:20.5px;" textLength="38.9" lengthAdjust="spacingAndGlyphs" >Cells</text>
<rect x="2160.5" y="132.0" width="76.8" height="65.5" fill="#fff" stroke="#c8c6c4" stroke-width="1.5" />
<circle cx="2203" cy="160.4" r="9.6" fill="#fafafa" stroke="#333" stroke-width="1.7"/>
<line x1="2196.3" y1="167.3" x2="2185.6" y2="178.2" stroke="#333" stroke-width="1.7" />
<text x="2165.7" y="228.2" fill="#444" style="font-size:22.3px;" textLength="67.3" lengthAdjust="spacingAndGlyphs" >Editing</text>
<path d="M2193.1 246.9 L2197.8 251.7 L2202.6 246.9" fill="none" stroke="#444" stroke-width="1.8" stroke-linecap="round" stroke-linejoin="round"/>
<path d="M2330.5 148.9 H2347.4 L2333.8 171.2 H2351.1 L2320.8 199.4 H2315.3 L2328.4 178.8 H2312.7 Z" fill="#83beec" stroke="#1e7fd1" stroke-width="1.6" stroke-linejoin="miter"/>
<text x="2306.6" y="236.9" fill="#444" style="font-size:22.3px;" textLength="49.9" lengthAdjust="spacingAndGlyphs" >Ideas</text>
<text x="2308.0" y="340.0" fill="#444" style="font-size:20.5px;" textLength="44.3" lengthAdjust="spacingAndGlyphs" >Ideas</text>
<path d="M2511.5 340.5 L2520 332.5 L2528.5 340.5" fill="none" stroke="#333" stroke-width="1.8" />
</svg></body></html>
